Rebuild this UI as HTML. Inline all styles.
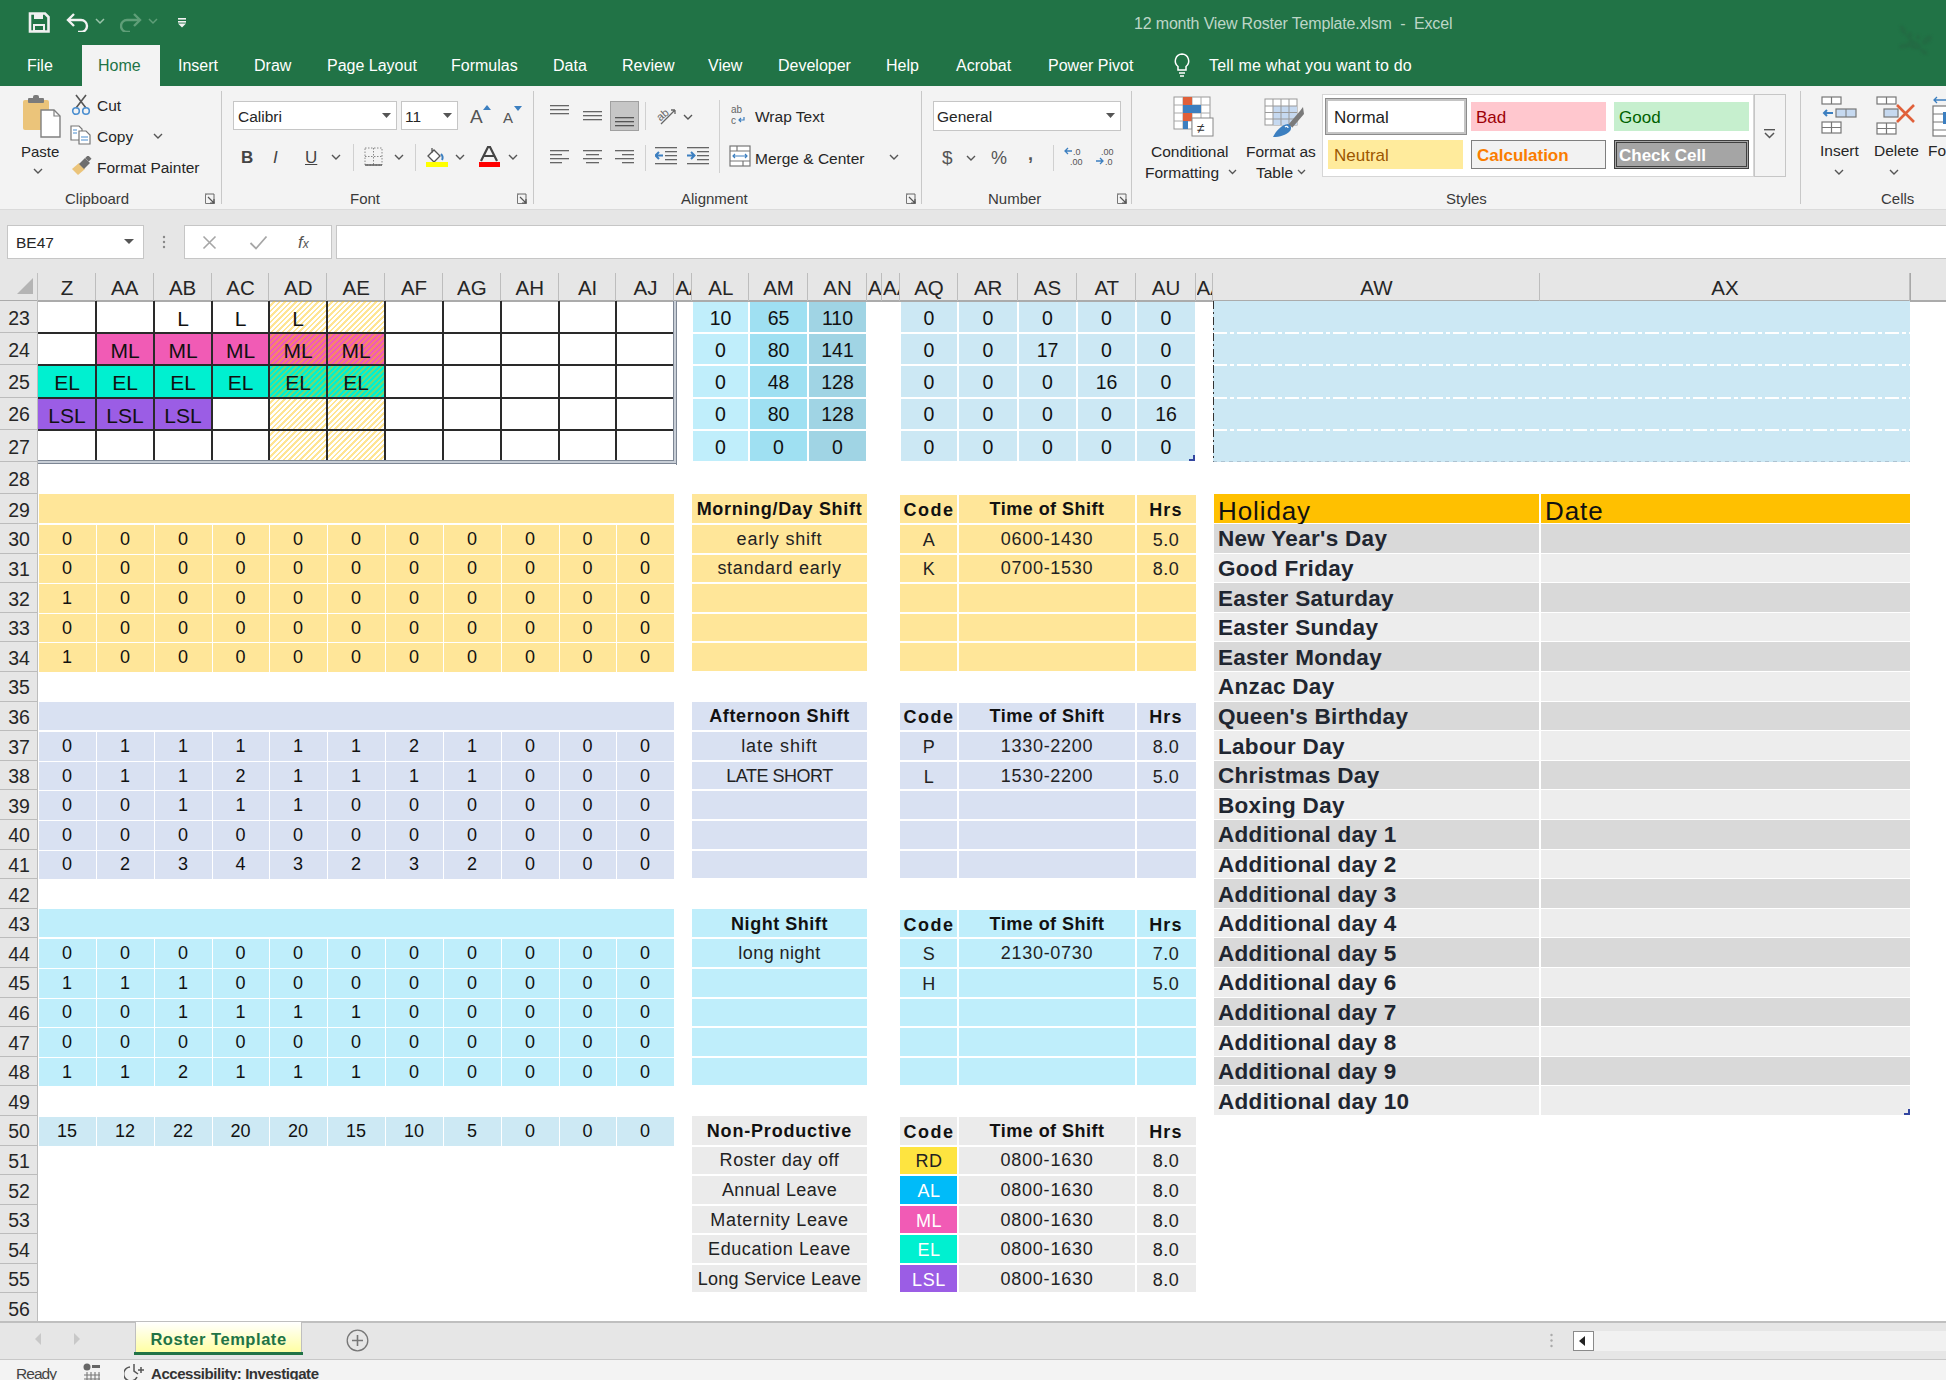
<!DOCTYPE html><html><head><meta charset="utf-8"><style>
html,body{margin:0;padding:0;width:1946px;height:1380px;overflow:hidden;background:#fff;font-family:"Liberation Sans",sans-serif;}
#root{position:relative;width:1946px;height:1380px;overflow:hidden;}
</style></head><body><div id="root">
<div style="position:absolute;left:0px;top:0px;width:1946px;height:86px;background:#217346;"></div>
<svg style="position:absolute;left:28px;top:12px;" width="22" height="21" viewBox="0 0 22 21"><path d="M2 1.5h15l3.5 3.5v14.5h-18.5z" fill="none" stroke="#f0f0f0" stroke-width="2.6"/><rect x="6" y="2" width="9" height="5" fill="#f0f0f0"/><rect x="6" y="13" width="10" height="6" fill="none" stroke="#f0f0f0" stroke-width="2"/></svg>
<svg style="position:absolute;left:66px;top:12px;" width="24" height="20" viewBox="0 0 24 20"><path d="M3 8h12a6 6 0 0 1 0 12h-3" fill="none" stroke="#f3f3f3" stroke-width="2.4"/><path d="M8 2L2 8l6 6" fill="none" stroke="#f3f3f3" stroke-width="2.4"/></svg>
<svg style="position:absolute;left:95px;top:18px;" width="10" height="7" viewBox="0 0 10 7"><path d="M1 1l4 4 4-4" fill="none" stroke="#9bc4ab" stroke-width="1.5"/></svg>
<svg style="position:absolute;left:120px;top:12px;" width="22" height="20" viewBox="0 0 22 20"><path d="M19 8H7a6 6 0 0 0 0 12h3" fill="none" stroke="#5f9e78" stroke-width="2.4"/><path d="M14 2l6 6-6 6" fill="none" stroke="#5f9e78" stroke-width="2.4"/></svg>
<svg style="position:absolute;left:148px;top:18px;" width="10" height="7" viewBox="0 0 10 7"><path d="M1 1l4 4 4-4" fill="none" stroke="#5f9e78" stroke-width="1.5"/></svg>
<svg style="position:absolute;left:177px;top:17px;" width="10" height="11" viewBox="0 0 10 11"><rect x="1" y="1" width="8" height="1.6" fill="#f3f3f3"/><rect x="1" y="4" width="8" height="1.6" fill="#f3f3f3"/><path d="M1 6.5h8L5 10.5z" fill="#f3f3f3"/></svg>
<div style="position:absolute;left:1134px;top:14.82px;font-size:16px;color:#bdd6c6;font-weight:normal;white-space:nowrap;line-height:normal;letter-spacing:-0.17px;">12 month View Roster Template.xlsm&nbsp; - &nbsp;Excel</div>
<svg style="position:absolute;left:1898px;top:24px;filter:blur(0.8px);" width="40" height="32" viewBox="0 0 40 32"><g fill="#246b44" opacity="0.9"><ellipse cx="6" cy="22" rx="5" ry="2.5" transform="rotate(-15 6 22)"/><ellipse cx="16" cy="21" rx="7" ry="4" transform="rotate(20 16 21)"/><ellipse cx="5" cy="6" rx="2.5" ry="5" transform="rotate(-25 5 6)"/><ellipse cx="12" cy="11" rx="2" ry="3"/><ellipse cx="20" cy="13" rx="2" ry="2.5"/><ellipse cx="29" cy="16" rx="3" ry="6" transform="rotate(50 29 16)"/><ellipse cx="26" cy="28" rx="4" ry="2" transform="rotate(35 26 28)"/><path d="M4 22C12 22 22 24 28 28M8 10l6 10M12 12l4 8" stroke="#246b44" stroke-width="1.6" fill="none"/></g></svg>
<div style="position:absolute;left:82px;top:45px;width:78px;height:41px;background:#f3f3f3;"></div>
<div style="position:absolute;left:27px;top:56.62px;font-size:16px;color:#ffffff;font-weight:normal;white-space:nowrap;line-height:normal;">File</div>
<div style="position:absolute;left:98px;top:56.62px;font-size:16px;color:#217346;font-weight:normal;white-space:nowrap;line-height:normal;">Home</div>
<div style="position:absolute;left:178px;top:56.62px;font-size:16px;color:#ffffff;font-weight:normal;white-space:nowrap;line-height:normal;">Insert</div>
<div style="position:absolute;left:254px;top:56.62px;font-size:16px;color:#ffffff;font-weight:normal;white-space:nowrap;line-height:normal;">Draw</div>
<div style="position:absolute;left:327px;top:56.62px;font-size:16px;color:#ffffff;font-weight:normal;white-space:nowrap;line-height:normal;">Page Layout</div>
<div style="position:absolute;left:451px;top:56.62px;font-size:16px;color:#ffffff;font-weight:normal;white-space:nowrap;line-height:normal;">Formulas</div>
<div style="position:absolute;left:553px;top:56.62px;font-size:16px;color:#ffffff;font-weight:normal;white-space:nowrap;line-height:normal;">Data</div>
<div style="position:absolute;left:622px;top:56.62px;font-size:16px;color:#ffffff;font-weight:normal;white-space:nowrap;line-height:normal;">Review</div>
<div style="position:absolute;left:708px;top:56.62px;font-size:16px;color:#ffffff;font-weight:normal;white-space:nowrap;line-height:normal;">View</div>
<div style="position:absolute;left:778px;top:56.62px;font-size:16px;color:#ffffff;font-weight:normal;white-space:nowrap;line-height:normal;">Developer</div>
<div style="position:absolute;left:886px;top:56.62px;font-size:16px;color:#ffffff;font-weight:normal;white-space:nowrap;line-height:normal;">Help</div>
<div style="position:absolute;left:956px;top:56.62px;font-size:16px;color:#ffffff;font-weight:normal;white-space:nowrap;line-height:normal;">Acrobat</div>
<div style="position:absolute;left:1048px;top:56.62px;font-size:16px;color:#ffffff;font-weight:normal;white-space:nowrap;line-height:normal;">Power Pivot</div>
<svg style="position:absolute;left:1173px;top:52px;" width="18" height="26" viewBox="0 0 18 26"><path d="M9 2a7 7 0 0 0-4 12.5V18h8v-3.5A7 7 0 0 0 9 2z" fill="none" stroke="#fff" stroke-width="1.5"/><path d="M6 21h6M7 24h4" stroke="#fff" stroke-width="1.5"/></svg>
<div style="position:absolute;left:1209px;top:56.62px;font-size:16px;color:#ffffff;font-weight:normal;white-space:nowrap;line-height:normal;letter-spacing:0.202px;">Tell me what you want to do</div>
<div style="position:absolute;left:0px;top:86px;width:1946px;height:123px;background:#f3f3f3;"></div>
<div style="position:absolute;left:0px;top:209px;width:1946px;height:1px;background:#dadada;"></div>
<div style="position:absolute;left:221px;top:91px;width:1px;height:113px;background:#c8c8c8;"></div>
<div style="position:absolute;left:533px;top:91px;width:1px;height:113px;background:#c8c8c8;"></div>
<div style="position:absolute;left:921px;top:91px;width:1px;height:113px;background:#c8c8c8;"></div>
<div style="position:absolute;left:1131px;top:91px;width:1px;height:113px;background:#c8c8c8;"></div>
<div style="position:absolute;left:1800px;top:91px;width:1px;height:113px;background:#c8c8c8;"></div>
<div style="position:absolute;left:65px;top:190.43px;font-size:15px;color:#3a3a3a;font-weight:normal;white-space:nowrap;line-height:normal;">Clipboard</div>
<div style="position:absolute;left:350px;top:190.43px;font-size:15px;color:#3a3a3a;font-weight:normal;white-space:nowrap;line-height:normal;">Font</div>
<div style="position:absolute;left:681px;top:190.43px;font-size:15px;color:#3a3a3a;font-weight:normal;white-space:nowrap;line-height:normal;">Alignment</div>
<div style="position:absolute;left:988px;top:190.43px;font-size:15px;color:#3a3a3a;font-weight:normal;white-space:nowrap;line-height:normal;">Number</div>
<div style="position:absolute;left:1446px;top:190.43px;font-size:15px;color:#3a3a3a;font-weight:normal;white-space:nowrap;line-height:normal;">Styles</div>
<div style="position:absolute;left:1881px;top:190.43px;font-size:15px;color:#3a3a3a;font-weight:normal;white-space:nowrap;line-height:normal;">Cells</div>
<svg style="position:absolute;left:204px;top:193px;" width="12" height="12" viewBox="0 0 12 12"><path d="M1 1h9v9" fill="none" stroke="#666" stroke-width="1"/><path d="M1 1v9h9" fill="none" stroke="#888" stroke-width="1" opacity="0"/><path d="M2.5 1.5h-1v9h9v-1" fill="none" stroke="#777"/><path d="M4 4l6 6M10 6v4H6" fill="none" stroke="#555" stroke-width="1.2"/></svg>
<svg style="position:absolute;left:516px;top:193px;" width="12" height="12" viewBox="0 0 12 12"><path d="M1 1h9v9" fill="none" stroke="#666" stroke-width="1"/><path d="M1 1v9h9" fill="none" stroke="#888" stroke-width="1" opacity="0"/><path d="M2.5 1.5h-1v9h9v-1" fill="none" stroke="#777"/><path d="M4 4l6 6M10 6v4H6" fill="none" stroke="#555" stroke-width="1.2"/></svg>
<svg style="position:absolute;left:905px;top:193px;" width="12" height="12" viewBox="0 0 12 12"><path d="M1 1h9v9" fill="none" stroke="#666" stroke-width="1"/><path d="M1 1v9h9" fill="none" stroke="#888" stroke-width="1" opacity="0"/><path d="M2.5 1.5h-1v9h9v-1" fill="none" stroke="#777"/><path d="M4 4l6 6M10 6v4H6" fill="none" stroke="#555" stroke-width="1.2"/></svg>
<svg style="position:absolute;left:1116px;top:193px;" width="12" height="12" viewBox="0 0 12 12"><path d="M1 1h9v9" fill="none" stroke="#666" stroke-width="1"/><path d="M1 1v9h9" fill="none" stroke="#888" stroke-width="1" opacity="0"/><path d="M2.5 1.5h-1v9h9v-1" fill="none" stroke="#777"/><path d="M4 4l6 6M10 6v4H6" fill="none" stroke="#555" stroke-width="1.2"/></svg>
<svg style="position:absolute;left:22px;top:95px;" width="40" height="43" viewBox="0 0 40 43"><rect x="1" y="5" width="26" height="30" rx="2" fill="#ebc47a"/><rect x="6" y="3" width="16" height="5" rx="1" fill="#7b7b7b"/><rect x="11" y="0" width="6" height="5" rx="2" fill="#7b7b7b"/><path d="M19 15h13l6 6v21H19z" fill="#fff" stroke="#808080" stroke-width="1.4"/><path d="M32 15v6h6" fill="none" stroke="#808080" stroke-width="1.2"/></svg>
<div style="position:absolute;left:21px;top:143.43px;font-size:15px;color:#262626;font-weight:normal;white-space:nowrap;line-height:normal;">Paste</div>
<svg style="position:absolute;left:33px;top:168px;" width="10" height="7" viewBox="0 0 10 7"><path d="M1 1l4 4 4-4" fill="none" stroke="#555" stroke-width="1.4"/></svg>
<svg style="position:absolute;left:71px;top:94px;" width="22" height="22" viewBox="0 0 22 22"><path d="M5 1l10 13M15 1L5 14" stroke="#555" stroke-width="1.6"/><circle cx="5" cy="17" r="3.3" fill="none" stroke="#4a8ed0" stroke-width="1.6"/><circle cx="15" cy="17" r="3.3" fill="none" stroke="#4a8ed0" stroke-width="1.6"/></svg>
<div style="position:absolute;left:97px;top:97.47px;font-size:15.5px;color:#262626;font-weight:normal;white-space:nowrap;line-height:normal;">Cut</div>
<svg style="position:absolute;left:70px;top:125px;" width="22" height="20" viewBox="0 0 22 20"><path d="M1 1h8l3 3v11H1z" fill="#fff" stroke="#777" stroke-width="1.2"/><path d="M9 6h7l4 4v9H9z" fill="#fff" stroke="#777" stroke-width="1.2"/><path d="M3 5h4M3 8h4M11 12h7M11 15h7" stroke="#4a8ed0" stroke-width="1.2"/></svg>
<div style="position:absolute;left:97px;top:128.47px;font-size:15.5px;color:#262626;font-weight:normal;white-space:nowrap;line-height:normal;">Copy</div>
<svg style="position:absolute;left:153px;top:133px;" width="10" height="7" viewBox="0 0 10 7"><path d="M1 1l4 4 4-4" fill="none" stroke="#555" stroke-width="1.4"/></svg>
<svg style="position:absolute;left:71px;top:156px;" width="22" height="20" viewBox="0 0 22 20"><path d="M1 13l7-6 6 6-7 6z" fill="#ebc47a"/><path d="M8 8l6-6 5 5-6 6z" fill="#6e6e6e"/><rect x="15" y="0" width="5" height="4" fill="#6e6e6e" transform="rotate(45 17 2)"/></svg>
<div style="position:absolute;left:97px;top:159.47px;font-size:15.5px;color:#262626;font-weight:normal;white-space:nowrap;line-height:normal;">Format Painter</div>
<div style="position:absolute;left:233px;top:101px;width:164px;height:29px;background:#fff;border:1px solid #c6c6c6;box-sizing:border-box;"></div>
<div style="position:absolute;left:238px;top:107.97px;font-size:15.5px;color:#262626;font-weight:normal;white-space:nowrap;line-height:normal;">Calibri</div>
<svg style="position:absolute;left:382px;top:113px;" width="9" height="5" viewBox="0 0 9 5"><path d="M0 0h9L4.5 5z" fill="#555"/></svg>
<div style="position:absolute;left:401px;top:101px;width:57px;height:29px;background:#fff;border:1px solid #c6c6c6;box-sizing:border-box;"></div>
<div style="position:absolute;left:405px;top:107.97px;font-size:15.5px;color:#262626;font-weight:normal;white-space:nowrap;line-height:normal;">11</div>
<svg style="position:absolute;left:443px;top:113px;" width="9" height="5" viewBox="0 0 9 5"><path d="M0 0h9L4.5 5z" fill="#555"/></svg>
<div style="position:absolute;left:470px;top:105.81px;font-size:19px;color:#555;font-weight:normal;white-space:nowrap;line-height:normal;">A</div>
<svg style="position:absolute;left:483px;top:105px;" width="8" height="5" viewBox="0 0 8 5"><path d="M0 5h8L4 0z" fill="#3c7fc0"/></svg>
<div style="position:absolute;left:503px;top:109.42px;font-size:15px;color:#555;font-weight:normal;white-space:nowrap;line-height:normal;">A</div>
<svg style="position:absolute;left:514px;top:106px;" width="8" height="5" viewBox="0 0 8 5"><path d="M0 0h8L4 5z" fill="#3c7fc0"/></svg>
<div style="position:absolute;left:241px;top:147.62px;font-size:17px;color:#444;font-weight:bold;white-space:nowrap;line-height:normal;">B</div>
<div style="position:absolute;left:273px;top:147.62px;font-size:17px;color:#444;font-weight:normal;white-space:nowrap;line-height:normal;font-style:italic;font-family:"Liberation Serif",serif;">I</div>
<div style="position:absolute;left:305px;top:147.62px;font-size:17px;color:#444;font-weight:normal;white-space:nowrap;line-height:normal;text-decoration:underline;">U</div>
<svg style="position:absolute;left:331px;top:154px;" width="10" height="7" viewBox="0 0 10 7"><path d="M1 1l4 4 4-4" fill="none" stroke="#555" stroke-width="1.4"/></svg>
<svg style="position:absolute;left:394px;top:154px;" width="10" height="7" viewBox="0 0 10 7"><path d="M1 1l4 4 4-4" fill="none" stroke="#555" stroke-width="1.4"/></svg>
<svg style="position:absolute;left:455px;top:154px;" width="10" height="7" viewBox="0 0 10 7"><path d="M1 1l4 4 4-4" fill="none" stroke="#555" stroke-width="1.4"/></svg>
<svg style="position:absolute;left:508px;top:154px;" width="10" height="7" viewBox="0 0 10 7"><path d="M1 1l4 4 4-4" fill="none" stroke="#555" stroke-width="1.4"/></svg>
<div style="position:absolute;left:353px;top:144px;width:1px;height:27px;background:#d0d0d0;"></div>
<div style="position:absolute;left:415px;top:144px;width:1px;height:27px;background:#d0d0d0;"></div>
<svg style="position:absolute;left:364px;top:147px;" width="19" height="19" viewBox="0 0 19 19"><path d="M1 1h17v17H1zM9.5 1v17M1 9.5h17" fill="none" stroke="#888" stroke-width="1" stroke-dasharray="1.5 1.5"/><path d="M1 18h17" stroke="#555" stroke-width="1.4"/></svg>
<svg style="position:absolute;left:425px;top:146px;" width="24" height="23" viewBox="0 0 24 23"><path d="M7 2v5M3 10l6-6 6 6-6 6z" fill="#fff" stroke="#555" stroke-width="1.3"/><path d="M16 8c2 2 2 4 1 6" fill="none" stroke="#3c7fc0" stroke-width="2"/><rect x="1" y="16" width="22" height="5" fill="#ffff00"/></svg>
<svg style="position:absolute;left:478px;top:146px;" width="22" height="23" viewBox="0 0 22 23"><path d="M3 15L10 1h2l7 14M6 10h10" fill="none" stroke="#444" stroke-width="2.2"/><rect x="1" y="16" width="22" height="5" fill="#ff0000"/></svg>
<svg style="position:absolute;left:550px;top:103px;" width="19" height="20" viewBox="0 0 19 20"><rect x="0" y="2" width="19" height="1.3" fill="#666"/><rect x="0" y="6" width="19" height="1.3" fill="#666"/><rect x="0" y="10" width="19" height="1.3" fill="#666"/></svg>
<svg style="position:absolute;left:583px;top:108px;" width="19" height="20" viewBox="0 0 19 20"><rect x="0" y="3" width="19" height="1.3" fill="#666"/><rect x="0" y="7" width="19" height="1.3" fill="#666"/><rect x="0" y="11" width="19" height="1.3" fill="#666"/></svg>
<div style="position:absolute;left:610px;top:101px;width:29px;height:30px;background:#c6c6c6;border:1px solid #a0a0a0;box-sizing:border-box;"></div>
<svg style="position:absolute;left:615px;top:113px;" width="19" height="20" viewBox="0 0 19 20"><rect x="0" y="4" width="19" height="1.3" fill="#555"/><rect x="0" y="8" width="19" height="1.3" fill="#555"/><rect x="0" y="12" width="19" height="1.3" fill="#555"/></svg>
<div style="position:absolute;left:645px;top:102px;width:1px;height:28px;background:#d0d0d0;"></div>
<svg style="position:absolute;left:655px;top:104px;" width="24" height="22" viewBox="0 0 24 22"><text x="1" y="14" font-size="11" fill="#666" transform="rotate(-40 8 10)" font-family="Liberation Sans">ab</text><path d="M6 20L20 6M20 6h-4M20 6v4" fill="none" stroke="#666" stroke-width="1.3"/></svg>
<svg style="position:absolute;left:683px;top:114px;" width="10" height="7" viewBox="0 0 10 7"><path d="M1 1l4 4 4-4" fill="none" stroke="#555" stroke-width="1.4"/></svg>
<div style="position:absolute;left:719px;top:100px;width:1px;height:73px;background:#d0d0d0;"></div>
<svg style="position:absolute;left:731px;top:104px;" width="18" height="22" viewBox="0 0 18 22"><text x="0" y="9" font-size="10" fill="#666" font-family="Liberation Sans">ab</text><text x="0" y="20" font-size="10" fill="#666" font-family="Liberation Sans">c</text><path d="M13 13v3h-5M10 14l-2 2 2 2" fill="none" stroke="#3c7fc0" stroke-width="1.2"/></svg>
<div style="position:absolute;left:755px;top:108.47px;font-size:15.5px;color:#262626;font-weight:normal;white-space:nowrap;line-height:normal;">Wrap Text</div>
<svg style="position:absolute;left:550px;top:148px;" width="19" height="20" viewBox="0 0 19 20"><rect x="0" y="2" width="19" height="1.3" fill="#666"/><rect x="0" y="6" width="12" height="1.3" fill="#666"/><rect x="0" y="10" width="19" height="1.3" fill="#666"/><rect x="0" y="14" width="12" height="1.3" fill="#666"/></svg>
<svg style="position:absolute;left:583px;top:148px;" width="19" height="20" viewBox="0 0 19 20"><rect x="0" y="2" width="19" height="1.3" fill="#666"/><rect x="3" y="6" width="13" height="1.3" fill="#666"/><rect x="0" y="10" width="19" height="1.3" fill="#666"/><rect x="3" y="14" width="13" height="1.3" fill="#666"/></svg>
<svg style="position:absolute;left:615px;top:148px;" width="19" height="20" viewBox="0 0 19 20"><rect x="0" y="2" width="19" height="1.3" fill="#666"/><rect x="7" y="6" width="12" height="1.3" fill="#666"/><rect x="0" y="10" width="19" height="1.3" fill="#666"/><rect x="7" y="14" width="12" height="1.3" fill="#666"/></svg>
<div style="position:absolute;left:645px;top:145px;width:1px;height:26px;background:#d0d0d0;"></div>
<svg style="position:absolute;left:655px;top:146px;" width="22" height="20" viewBox="0 0 22 20"><rect x="0" y="1" width="22" height="1.3" fill="#666"/><rect x="10" y="5" width="12" height="1.3" fill="#666"/><rect x="10" y="9" width="12" height="1.3" fill="#666"/><rect x="10" y="13" width="12" height="1.3" fill="#666"/><rect x="0" y="17" width="22" height="1.3" fill="#666"/><path d="M8 9.5H1M4 6l-3.5 3.5L4 13" fill="none" stroke="#3c7fc0" stroke-width="2"/></svg>
<svg style="position:absolute;left:687px;top:146px;" width="22" height="20" viewBox="0 0 22 20"><rect x="0" y="1" width="22" height="1.3" fill="#666"/><rect x="10" y="5" width="12" height="1.3" fill="#666"/><rect x="10" y="9" width="12" height="1.3" fill="#666"/><rect x="10" y="13" width="12" height="1.3" fill="#666"/><rect x="0" y="17" width="22" height="1.3" fill="#666"/><path d="M0 9.5h7M4 6l3.5 3.5L4 13" fill="none" stroke="#3c7fc0" stroke-width="2"/></svg>
<svg style="position:absolute;left:729px;top:145px;" width="22" height="22" viewBox="0 0 22 22"><rect x="1" y="1" width="20" height="20" fill="#fff" stroke="#777" stroke-width="1.2"/><path d="M1 6h20M1 16h20M8 1v5M14 16v5" stroke="#777" stroke-width="1.2"/><path d="M4 11h14M6 9l-2 2 2 2M16 9l2 2-2 2" fill="none" stroke="#3c7fc0" stroke-width="1.2"/></svg>
<div style="position:absolute;left:755px;top:149.97px;font-size:15.5px;color:#262626;font-weight:normal;white-space:nowrap;line-height:normal;">Merge &amp; Center</div>
<svg style="position:absolute;left:889px;top:154px;" width="10" height="7" viewBox="0 0 10 7"><path d="M1 1l4 4 4-4" fill="none" stroke="#555" stroke-width="1.4"/></svg>
<div style="position:absolute;left:933px;top:101px;width:188px;height:30px;background:#fff;border:1px solid #c6c6c6;box-sizing:border-box;"></div>
<div style="position:absolute;left:937px;top:108.47px;font-size:15.5px;color:#262626;font-weight:normal;white-space:nowrap;line-height:normal;">General</div>
<svg style="position:absolute;left:1106px;top:113px;" width="9" height="5" viewBox="0 0 9 5"><path d="M0 0h9L4.5 5z" fill="#555"/></svg>
<div style="position:absolute;left:942px;top:146.81px;font-size:19px;color:#555;font-weight:normal;white-space:nowrap;line-height:normal;">$</div>
<svg style="position:absolute;left:966px;top:155px;" width="10" height="7" viewBox="0 0 10 7"><path d="M1 1l4 4 4-4" fill="none" stroke="#555" stroke-width="1.4"/></svg>
<div style="position:absolute;left:991px;top:147.71px;font-size:18px;color:#555;font-weight:normal;white-space:nowrap;line-height:normal;">%</div>
<div style="position:absolute;left:1028px;top:143.71px;font-size:18px;color:#555;font-weight:bold;white-space:nowrap;line-height:normal;">,</div>
<div style="position:absolute;left:1053px;top:145px;width:1px;height:26px;background:#d0d0d0;"></div>
<svg style="position:absolute;left:1063px;top:146px;" width="22" height="22" viewBox="0 0 22 22"><path d="M9 5H2M5 2L2 5l3 3" fill="none" stroke="#3c7fc0" stroke-width="1.3"/><text x="10" y="9" font-size="9" fill="#555" font-family="Liberation Sans">.0</text><text x="7" y="19" font-size="9" fill="#555" font-family="Liberation Sans">.00</text></svg>
<svg style="position:absolute;left:1095px;top:146px;" width="22" height="22" viewBox="0 0 22 22"><text x="6" y="9" font-size="9" fill="#555" font-family="Liberation Sans">.00</text><path d="M1 15h7M5 12l3 3-3 3" fill="none" stroke="#3c7fc0" stroke-width="1.3"/><text x="10" y="19" font-size="9" fill="#555" font-family="Liberation Sans">.0</text></svg>
<svg style="position:absolute;left:1173px;top:96px;" width="42" height="41" viewBox="0 0 42 41"><g stroke="#999" stroke-width="1" fill="#fff"><rect x="1" y="1" width="36" height="32"/></g><path d="M1 9h36M1 17h36M1 25h36M10 1v32M19 1v32M28 1v32" stroke="#aaa" stroke-width="1"/><rect x="10" y="1" width="9" height="8" fill="#e0603a"/><rect x="10" y="9" width="18" height="8" fill="#3c7fc0"/><rect x="10" y="17" width="9" height="8" fill="#e0603a"/><rect x="10" y="25" width="5" height="8" fill="#3c7fc0"/><rect x="19" y="22" width="21" height="18" fill="#fff" stroke="#888" stroke-width="1"/><text x="24" y="37" font-size="14" fill="#333" font-family="Liberation Sans">≠</text></svg>
<div style="position:absolute;left:1151px;top:142.97px;font-size:15.5px;color:#262626;font-weight:normal;white-space:nowrap;line-height:normal;">Conditional</div>
<div style="position:absolute;left:1145px;top:164.47px;font-size:15.5px;color:#262626;font-weight:normal;white-space:nowrap;line-height:normal;">Formatting</div>
<svg style="position:absolute;left:1228px;top:169px;" width="9" height="6" viewBox="0 0 9 6"><path d="M1 1l3.5 3.5L8 1" fill="none" stroke="#555" stroke-width="1.3"/></svg>
<svg style="position:absolute;left:1264px;top:98px;" width="40" height="40" viewBox="0 0 40 40"><rect x="1" y="1" width="32" height="26" fill="#fff" stroke="#999"/><rect x="9" y="8" width="24" height="19" fill="#c6d9f0"/><path d="M1 8h32M1 14.5h32M1 21h32M9 1v26M17 1v26M25 1v26" stroke="#999" stroke-width="1"/><path d="M24 27L36 13l3 -4 1 7 -12 14z" fill="#7a7a7a"/><path d="M24 27l4 3" stroke="#f3f3f3" stroke-width="1.2"/><path d="M9 39c3-6 8-12 15-13 3 1 4 4 2 7-4 4-10 6-17 6z" fill="#3c7fc0"/><path d="M21 29c1-1 3-1 3 1" stroke="#fff" stroke-width="1.3" fill="none"/></svg>
<div style="position:absolute;left:1246px;top:142.97px;font-size:15.5px;color:#262626;font-weight:normal;white-space:nowrap;line-height:normal;">Format as</div>
<div style="position:absolute;left:1256px;top:164.47px;font-size:15.5px;color:#262626;font-weight:normal;white-space:nowrap;line-height:normal;">Table</div>
<svg style="position:absolute;left:1297px;top:169px;" width="9" height="6" viewBox="0 0 9 6"><path d="M1 1l3.5 3.5L8 1" fill="none" stroke="#555" stroke-width="1.3"/></svg>
<div style="position:absolute;left:1322px;top:94px;width:432px;height:83px;background:#fff;border:1px solid #d6d6d6;box-sizing:border-box;"></div>
<div style="position:absolute;left:1754px;top:94px;width:32px;height:83px;background:#f3f3f3;border:1px solid #c6c6c6;box-sizing:border-box;"></div>
<svg style="position:absolute;left:1763px;top:128px;" width="13" height="12" viewBox="0 0 13 12"><rect x="1" y="1" width="11" height="1.4" fill="#555"/><path d="M2 5l4.5 4.5L11 5" fill="none" stroke="#555" stroke-width="1.5"/></svg>
<div style="position:absolute;left:1325px;top:98px;width:142px;height:37px;background:#fff;border:1px solid #8c8c8c;box-shadow:inset 0 0 0 2px #c4c4c4;box-sizing:border-box;"></div>
<div style="position:absolute;left:1334px;top:107.61px;font-size:17px;color:#1e1e1e;font-weight:normal;white-space:nowrap;line-height:normal;">Normal</div>
<div style="position:absolute;left:1471px;top:102px;width:135px;height:29px;background:#ffc7ce;"></div>
<div style="position:absolute;left:1476px;top:107.61px;font-size:17px;color:#9c0006;font-weight:normal;white-space:nowrap;line-height:normal;">Bad</div>
<div style="position:absolute;left:1614px;top:102px;width:135px;height:29px;background:#c6efce;"></div>
<div style="position:absolute;left:1619px;top:107.61px;font-size:17px;color:#006100;font-weight:normal;white-space:nowrap;line-height:normal;">Good</div>
<div style="position:absolute;left:1328px;top:140px;width:135px;height:29px;background:#ffeb9c;"></div>
<div style="position:absolute;left:1334px;top:145.62px;font-size:17px;color:#9c5700;font-weight:normal;white-space:nowrap;line-height:normal;">Neutral</div>
<div style="position:absolute;left:1471px;top:140px;width:135px;height:29px;background:#f2f2f2;border:1px solid #7f7f7f;box-sizing:border-box;"></div>
<div style="position:absolute;left:1477px;top:145.62px;font-size:17px;color:#fa7d00;font-weight:bold;white-space:nowrap;line-height:normal;">Calculation</div>
<div style="position:absolute;left:1614px;top:140px;width:135px;height:29px;background:#a5a5a5;border:3px double #3f3f3f;box-sizing:border-box;"></div>
<div style="position:absolute;left:1619px;top:145.62px;font-size:17px;color:#ffffff;font-weight:bold;white-space:nowrap;line-height:normal;">Check Cell</div>
<svg style="position:absolute;left:1821px;top:96px;" width="38" height="38" viewBox="0 0 38 38"><g fill="#fff" stroke="#777" stroke-width="1.2"><rect x="1" y="1" width="19" height="7"/><path d="M10.5 1v7"/><rect x="1" y="26" width="19" height="11"/><path d="M1 31.5h19M10.5 26v11"/></g><rect x="15" y="13" width="20" height="8" fill="#c6d9f0" stroke="#777" stroke-width="1.2"/><path d="M25 13v8" stroke="#777"/><path d="M12 17H3M6 14l-3 3 3 3" fill="none" stroke="#3c7fc0" stroke-width="2"/></svg>
<div style="position:absolute;left:1820px;top:142.47px;font-size:15.5px;color:#262626;font-weight:normal;white-space:nowrap;line-height:normal;">Insert</div>
<svg style="position:absolute;left:1834px;top:169px;" width="10" height="7" viewBox="0 0 10 7"><path d="M1 1l4 4 4-4" fill="none" stroke="#555" stroke-width="1.4"/></svg>
<svg style="position:absolute;left:1876px;top:96px;" width="42" height="40" viewBox="0 0 42 40"><g fill="#fff" stroke="#777" stroke-width="1.2"><rect x="1" y="1" width="19" height="7"/><path d="M10.5 1v7"/><rect x="1" y="27" width="19" height="11"/><path d="M1 32.5h19M10.5 27v11"/></g><rect x="8" y="13" width="14" height="8" fill="#c6d9f0" stroke="#777" stroke-width="1.2"/><path d="M21 9l17 17M38 9L21 26" stroke="#e0603a" stroke-width="2.6"/></svg>
<div style="position:absolute;left:1874px;top:142.47px;font-size:15.5px;color:#262626;font-weight:normal;white-space:nowrap;line-height:normal;">Delete</div>
<svg style="position:absolute;left:1889px;top:169px;" width="10" height="7" viewBox="0 0 10 7"><path d="M1 1l4 4 4-4" fill="none" stroke="#555" stroke-width="1.4"/></svg>
<svg style="position:absolute;left:1932px;top:94px;" width="14" height="44" viewBox="0 0 14 44"><path d="M2 6h12M5 3L2 6l3 3" fill="none" stroke="#3c7fc0" stroke-width="1.3"/><rect x="1" y="12" width="14" height="30" fill="#fff" stroke="#777" stroke-width="1.2"/><path d="M1 20h14M1 28h14M1 36h14" stroke="#777"/><rect x="11" y="18" width="4" height="12" fill="#3c7fc0"/></svg>
<div style="position:absolute;left:1928px;top:142.47px;font-size:15.5px;color:#262626;font-weight:normal;white-space:nowrap;line-height:normal;">Fo</div>
<div style="position:absolute;left:0px;top:210px;width:1946px;height:62px;background:#e6e6e6;"></div>
<div style="position:absolute;left:7px;top:225px;width:137px;height:34px;background:#fff;border:1px solid #c6c6c6;box-sizing:border-box;"></div>
<div style="position:absolute;left:16px;top:234.27px;font-size:15.5px;color:#262626;font-weight:normal;white-space:nowrap;line-height:normal;">BE47</div>
<svg style="position:absolute;left:124px;top:239px;" width="10" height="5" viewBox="0 0 10 5"><path d="M0 0h10L5 5z" fill="#555"/></svg>
<svg style="position:absolute;left:162px;top:235px;" width="4" height="14" viewBox="0 0 4 14"><circle cx="2" cy="2" r="1.2" fill="#888"/><circle cx="2" cy="7" r="1.2" fill="#888"/><circle cx="2" cy="12" r="1.2" fill="#888"/></svg>
<div style="position:absolute;left:184px;top:225px;width:148px;height:34px;background:#fff;border:1px solid #c6c6c6;box-sizing:border-box;"></div>
<svg style="position:absolute;left:202px;top:235px;" width="15" height="15" viewBox="0 0 15 15"><path d="M1.5 1.5l12 12M13.5 1.5l-12 12" stroke="#a6a6a6" stroke-width="1.6"/></svg>
<svg style="position:absolute;left:249px;top:235px;" width="19" height="15" viewBox="0 0 19 15"><path d="M1.5 8l5.5 5.5L17.5 1.5" fill="none" stroke="#a6a6a6" stroke-width="1.8"/></svg>
<div style="position:absolute;left:298px;top:232.62px;font-size:17px;color:#555;font-weight:normal;white-space:nowrap;line-height:normal;font-family:"Liberation Serif",serif;"><i>f</i><span style="font-size:12px"><i>x</i></span></div>
<div style="position:absolute;left:336px;top:225px;width:1620px;height:34px;background:#fff;border:1px solid #c6c6c6;box-sizing:border-box;"></div>
<div style="position:absolute;left:0px;top:272px;width:1946px;height:29px;background:#e6e6e6;"></div>
<div style="position:absolute;left:0px;top:300px;width:1946px;height:2px;background:#ababab;"></div>
<svg style="position:absolute;left:14px;top:276px;" width="20" height="20" viewBox="0 0 20 20"><path d="M19 2v16H3z" fill="#b4b4b4"/></svg>
<div style="position:absolute;left:37px;top:273px;width:1px;height:28px;background:#c0c0c0;"></div>
<div style="position:absolute;left:95px;top:273px;width:1px;height:28px;background:#bdbdbd;"></div>
<div style="position:absolute;left:38.0px;top:275.95px;width:57.849999999999994px;text-align:center;font-size:20.5px;color:#262626;font-weight:normal;white-space:nowrap;line-height:normal;">Z</div>
<div style="position:absolute;left:153px;top:273px;width:1px;height:28px;background:#bdbdbd;"></div>
<div style="position:absolute;left:95.85px;top:275.95px;width:57.849999999999994px;text-align:center;font-size:20.5px;color:#262626;font-weight:normal;white-space:nowrap;line-height:normal;">AA</div>
<div style="position:absolute;left:211px;top:273px;width:1px;height:28px;background:#bdbdbd;"></div>
<div style="position:absolute;left:153.7px;top:275.95px;width:57.85000000000002px;text-align:center;font-size:20.5px;color:#262626;font-weight:normal;white-space:nowrap;line-height:normal;">AB</div>
<div style="position:absolute;left:268px;top:273px;width:1px;height:28px;background:#bdbdbd;"></div>
<div style="position:absolute;left:211.55px;top:275.95px;width:57.849999999999966px;text-align:center;font-size:20.5px;color:#262626;font-weight:normal;white-space:nowrap;line-height:normal;">AC</div>
<div style="position:absolute;left:326px;top:273px;width:1px;height:28px;background:#bdbdbd;"></div>
<div style="position:absolute;left:269.4px;top:275.95px;width:57.85000000000002px;text-align:center;font-size:20.5px;color:#262626;font-weight:normal;white-space:nowrap;line-height:normal;">AD</div>
<div style="position:absolute;left:384px;top:273px;width:1px;height:28px;background:#bdbdbd;"></div>
<div style="position:absolute;left:327.25px;top:275.95px;width:57.85000000000002px;text-align:center;font-size:20.5px;color:#262626;font-weight:normal;white-space:nowrap;line-height:normal;">AE</div>
<div style="position:absolute;left:442px;top:273px;width:1px;height:28px;background:#bdbdbd;"></div>
<div style="position:absolute;left:385.1px;top:275.95px;width:57.849999999999966px;text-align:center;font-size:20.5px;color:#262626;font-weight:normal;white-space:nowrap;line-height:normal;">AF</div>
<div style="position:absolute;left:500px;top:273px;width:1px;height:28px;background:#bdbdbd;"></div>
<div style="position:absolute;left:442.95px;top:275.95px;width:57.85000000000002px;text-align:center;font-size:20.5px;color:#262626;font-weight:normal;white-space:nowrap;line-height:normal;">AG</div>
<div style="position:absolute;left:558px;top:273px;width:1px;height:28px;background:#bdbdbd;"></div>
<div style="position:absolute;left:500.8px;top:275.95px;width:57.849999999999966px;text-align:center;font-size:20.5px;color:#262626;font-weight:normal;white-space:nowrap;line-height:normal;">AH</div>
<div style="position:absolute;left:615px;top:273px;width:1px;height:28px;background:#bdbdbd;"></div>
<div style="position:absolute;left:558.65px;top:275.95px;width:57.85000000000002px;text-align:center;font-size:20.5px;color:#262626;font-weight:normal;white-space:nowrap;line-height:normal;">AI</div>
<div style="position:absolute;left:673px;top:273px;width:1px;height:28px;background:#bdbdbd;"></div>
<div style="position:absolute;left:616.5px;top:275.95px;width:57.85000000000002px;text-align:center;font-size:20.5px;color:#262626;font-weight:normal;white-space:nowrap;line-height:normal;">AJ</div>
<div style="position:absolute;left:691px;top:273px;width:1px;height:28px;background:#bdbdbd;"></div>
<div style="position:absolute;left:675.4px;top:275.9px;width:16.1px;overflow:hidden;font-size:20.5px;color:#262626;white-space:nowrap;line-height:normal;">AA</div>
<div style="position:absolute;left:748px;top:273px;width:1px;height:28px;background:#bdbdbd;"></div>
<div style="position:absolute;left:692.5px;top:275.95px;width:56.5px;text-align:center;font-size:20.5px;color:#262626;font-weight:normal;white-space:nowrap;line-height:normal;">AL</div>
<div style="position:absolute;left:807px;top:273px;width:1px;height:28px;background:#bdbdbd;"></div>
<div style="position:absolute;left:749px;top:275.95px;width:59px;text-align:center;font-size:20.5px;color:#262626;font-weight:normal;white-space:nowrap;line-height:normal;">AM</div>
<div style="position:absolute;left:866px;top:273px;width:1px;height:28px;background:#bdbdbd;"></div>
<div style="position:absolute;left:808px;top:275.95px;width:59px;text-align:center;font-size:20.5px;color:#262626;font-weight:normal;white-space:nowrap;line-height:normal;">AN</div>
<div style="position:absolute;left:881px;top:273px;width:1px;height:28px;background:#bdbdbd;"></div>
<div style="position:absolute;left:868.0px;top:275.9px;width:13.0px;overflow:hidden;font-size:20.5px;color:#262626;white-space:nowrap;line-height:normal;">AA</div>
<div style="position:absolute;left:899px;top:273px;width:1px;height:28px;background:#bdbdbd;"></div>
<div style="position:absolute;left:883.0px;top:275.9px;width:15.5px;overflow:hidden;font-size:20.5px;color:#262626;white-space:nowrap;line-height:normal;">AA</div>
<div style="position:absolute;left:957px;top:273px;width:1px;height:28px;background:#bdbdbd;"></div>
<div style="position:absolute;left:899.5px;top:275.95px;width:59.0px;text-align:center;font-size:20.5px;color:#262626;font-weight:normal;white-space:nowrap;line-height:normal;">AQ</div>
<div style="position:absolute;left:1017px;top:273px;width:1px;height:28px;background:#bdbdbd;"></div>
<div style="position:absolute;left:958.5px;top:275.95px;width:59.299999999999955px;text-align:center;font-size:20.5px;color:#262626;font-weight:normal;white-space:nowrap;line-height:normal;">AR</div>
<div style="position:absolute;left:1076px;top:273px;width:1px;height:28px;background:#bdbdbd;"></div>
<div style="position:absolute;left:1017.8px;top:275.95px;width:59.200000000000045px;text-align:center;font-size:20.5px;color:#262626;font-weight:normal;white-space:nowrap;line-height:normal;">AS</div>
<div style="position:absolute;left:1135px;top:273px;width:1px;height:28px;background:#bdbdbd;"></div>
<div style="position:absolute;left:1077px;top:275.95px;width:59.5px;text-align:center;font-size:20.5px;color:#262626;font-weight:normal;white-space:nowrap;line-height:normal;">AT</div>
<div style="position:absolute;left:1195px;top:273px;width:1px;height:28px;background:#bdbdbd;"></div>
<div style="position:absolute;left:1136.5px;top:275.95px;width:59.0px;text-align:center;font-size:20.5px;color:#262626;font-weight:normal;white-space:nowrap;line-height:normal;">AU</div>
<div style="position:absolute;left:1212px;top:273px;width:1px;height:28px;background:#bdbdbd;"></div>
<div style="position:absolute;left:1196.5px;top:275.9px;width:15.5px;overflow:hidden;font-size:20.5px;color:#262626;white-space:nowrap;line-height:normal;">AA</div>
<div style="position:absolute;left:1539px;top:273px;width:1px;height:28px;background:#bdbdbd;"></div>
<div style="position:absolute;left:1213px;top:275.95px;width:327px;text-align:center;font-size:20.5px;color:#262626;font-weight:normal;white-space:nowrap;line-height:normal;">AW</div>
<div style="position:absolute;left:1909px;top:273px;width:1px;height:28px;background:#bdbdbd;"></div>
<div style="position:absolute;left:1540px;top:275.95px;width:370px;text-align:center;font-size:20.5px;color:#262626;font-weight:normal;white-space:nowrap;line-height:normal;">AX</div>
<div style="position:absolute;left:1910px;top:273px;width:1px;height:28px;background:#a8a8a8;"></div>
<div style="position:absolute;left:0px;top:301px;width:38px;height:1021px;background:#e6e6e6;"></div>
<div style="position:absolute;left:37px;top:301px;width:1px;height:1021px;background:#bdbdbd;"></div>
<div style="position:absolute;left:0px;top:332px;width:37px;height:1px;background:#bcbcbc;"></div>
<div style="position:absolute;left:0px;top:306.75px;width:38px;text-align:center;font-size:19.5px;color:#262626;font-weight:normal;white-space:nowrap;line-height:normal;">23</div>
<div style="position:absolute;left:0px;top:364px;width:37px;height:1px;background:#bcbcbc;"></div>
<div style="position:absolute;left:0px;top:338.95px;width:38px;text-align:center;font-size:19.5px;color:#262626;font-weight:normal;white-space:nowrap;line-height:normal;">24</div>
<div style="position:absolute;left:0px;top:397px;width:37px;height:1px;background:#bcbcbc;"></div>
<div style="position:absolute;left:0px;top:371.15px;width:38px;text-align:center;font-size:19.5px;color:#262626;font-weight:normal;white-space:nowrap;line-height:normal;">25</div>
<div style="position:absolute;left:0px;top:429px;width:37px;height:1px;background:#bcbcbc;"></div>
<div style="position:absolute;left:0px;top:403.35px;width:38px;text-align:center;font-size:19.5px;color:#262626;font-weight:normal;white-space:nowrap;line-height:normal;">26</div>
<div style="position:absolute;left:0px;top:461px;width:37px;height:1px;background:#bcbcbc;"></div>
<div style="position:absolute;left:0px;top:435.55px;width:38px;text-align:center;font-size:19.5px;color:#262626;font-weight:normal;white-space:nowrap;line-height:normal;">27</div>
<div style="position:absolute;left:0px;top:493px;width:37px;height:1px;background:#bcbcbc;"></div>
<div style="position:absolute;left:0px;top:467.80px;width:38px;text-align:center;font-size:19.5px;color:#262626;font-weight:normal;white-space:nowrap;line-height:normal;">28</div>
<div style="position:absolute;left:0px;top:523px;width:37px;height:1px;background:#bcbcbc;"></div>
<div style="position:absolute;left:0px;top:498.75px;width:38px;text-align:center;font-size:19.5px;color:#262626;font-weight:normal;white-space:nowrap;line-height:normal;">29</div>
<div style="position:absolute;left:0px;top:553px;width:37px;height:1px;background:#bcbcbc;"></div>
<div style="position:absolute;left:0px;top:528.35px;width:38px;text-align:center;font-size:19.5px;color:#262626;font-weight:normal;white-space:nowrap;line-height:normal;">30</div>
<div style="position:absolute;left:0px;top:582px;width:37px;height:1px;background:#bcbcbc;"></div>
<div style="position:absolute;left:0px;top:557.95px;width:38px;text-align:center;font-size:19.5px;color:#262626;font-weight:normal;white-space:nowrap;line-height:normal;">31</div>
<div style="position:absolute;left:0px;top:612px;width:37px;height:1px;background:#bcbcbc;"></div>
<div style="position:absolute;left:0px;top:587.55px;width:38px;text-align:center;font-size:19.5px;color:#262626;font-weight:normal;white-space:nowrap;line-height:normal;">32</div>
<div style="position:absolute;left:0px;top:641px;width:37px;height:1px;background:#bcbcbc;"></div>
<div style="position:absolute;left:0px;top:617.15px;width:38px;text-align:center;font-size:19.5px;color:#262626;font-weight:normal;white-space:nowrap;line-height:normal;">33</div>
<div style="position:absolute;left:0px;top:671px;width:37px;height:1px;background:#bcbcbc;"></div>
<div style="position:absolute;left:0px;top:646.75px;width:38px;text-align:center;font-size:19.5px;color:#262626;font-weight:normal;white-space:nowrap;line-height:normal;">34</div>
<div style="position:absolute;left:0px;top:701px;width:37px;height:1px;background:#bcbcbc;"></div>
<div style="position:absolute;left:0px;top:676.35px;width:38px;text-align:center;font-size:19.5px;color:#262626;font-weight:normal;white-space:nowrap;line-height:normal;">35</div>
<div style="position:absolute;left:0px;top:730px;width:37px;height:1px;background:#bcbcbc;"></div>
<div style="position:absolute;left:0px;top:705.95px;width:38px;text-align:center;font-size:19.5px;color:#262626;font-weight:normal;white-space:nowrap;line-height:normal;">36</div>
<div style="position:absolute;left:0px;top:760px;width:37px;height:1px;background:#bcbcbc;"></div>
<div style="position:absolute;left:0px;top:735.55px;width:38px;text-align:center;font-size:19.5px;color:#262626;font-weight:normal;white-space:nowrap;line-height:normal;">37</div>
<div style="position:absolute;left:0px;top:789px;width:37px;height:1px;background:#bcbcbc;"></div>
<div style="position:absolute;left:0px;top:765.15px;width:38px;text-align:center;font-size:19.5px;color:#262626;font-weight:normal;white-space:nowrap;line-height:normal;">38</div>
<div style="position:absolute;left:0px;top:819px;width:37px;height:1px;background:#bcbcbc;"></div>
<div style="position:absolute;left:0px;top:794.75px;width:38px;text-align:center;font-size:19.5px;color:#262626;font-weight:normal;white-space:nowrap;line-height:normal;">39</div>
<div style="position:absolute;left:0px;top:849px;width:37px;height:1px;background:#bcbcbc;"></div>
<div style="position:absolute;left:0px;top:824.35px;width:38px;text-align:center;font-size:19.5px;color:#262626;font-weight:normal;white-space:nowrap;line-height:normal;">40</div>
<div style="position:absolute;left:0px;top:878px;width:37px;height:1px;background:#bcbcbc;"></div>
<div style="position:absolute;left:0px;top:853.95px;width:38px;text-align:center;font-size:19.5px;color:#262626;font-weight:normal;white-space:nowrap;line-height:normal;">41</div>
<div style="position:absolute;left:0px;top:908px;width:37px;height:1px;background:#bcbcbc;"></div>
<div style="position:absolute;left:0px;top:883.55px;width:38px;text-align:center;font-size:19.5px;color:#262626;font-weight:normal;white-space:nowrap;line-height:normal;">42</div>
<div style="position:absolute;left:0px;top:937px;width:37px;height:1px;background:#bcbcbc;"></div>
<div style="position:absolute;left:0px;top:913.15px;width:38px;text-align:center;font-size:19.5px;color:#262626;font-weight:normal;white-space:nowrap;line-height:normal;">43</div>
<div style="position:absolute;left:0px;top:967px;width:37px;height:1px;background:#bcbcbc;"></div>
<div style="position:absolute;left:0px;top:942.75px;width:38px;text-align:center;font-size:19.5px;color:#262626;font-weight:normal;white-space:nowrap;line-height:normal;">44</div>
<div style="position:absolute;left:0px;top:997px;width:37px;height:1px;background:#bcbcbc;"></div>
<div style="position:absolute;left:0px;top:972.35px;width:38px;text-align:center;font-size:19.5px;color:#262626;font-weight:normal;white-space:nowrap;line-height:normal;">45</div>
<div style="position:absolute;left:0px;top:1026px;width:37px;height:1px;background:#bcbcbc;"></div>
<div style="position:absolute;left:0px;top:1001.95px;width:38px;text-align:center;font-size:19.5px;color:#262626;font-weight:normal;white-space:nowrap;line-height:normal;">46</div>
<div style="position:absolute;left:0px;top:1056px;width:37px;height:1px;background:#bcbcbc;"></div>
<div style="position:absolute;left:0px;top:1031.55px;width:38px;text-align:center;font-size:19.5px;color:#262626;font-weight:normal;white-space:nowrap;line-height:normal;">47</div>
<div style="position:absolute;left:0px;top:1085px;width:37px;height:1px;background:#bcbcbc;"></div>
<div style="position:absolute;left:0px;top:1061.15px;width:38px;text-align:center;font-size:19.5px;color:#262626;font-weight:normal;white-space:nowrap;line-height:normal;">48</div>
<div style="position:absolute;left:0px;top:1115px;width:37px;height:1px;background:#bcbcbc;"></div>
<div style="position:absolute;left:0px;top:1090.75px;width:38px;text-align:center;font-size:19.5px;color:#262626;font-weight:normal;white-space:nowrap;line-height:normal;">49</div>
<div style="position:absolute;left:0px;top:1145px;width:37px;height:1px;background:#bcbcbc;"></div>
<div style="position:absolute;left:0px;top:1120.35px;width:38px;text-align:center;font-size:19.5px;color:#262626;font-weight:normal;white-space:nowrap;line-height:normal;">50</div>
<div style="position:absolute;left:0px;top:1174px;width:37px;height:1px;background:#bcbcbc;"></div>
<div style="position:absolute;left:0px;top:1149.95px;width:38px;text-align:center;font-size:19.5px;color:#262626;font-weight:normal;white-space:nowrap;line-height:normal;">51</div>
<div style="position:absolute;left:0px;top:1204px;width:37px;height:1px;background:#bcbcbc;"></div>
<div style="position:absolute;left:0px;top:1179.55px;width:38px;text-align:center;font-size:19.5px;color:#262626;font-weight:normal;white-space:nowrap;line-height:normal;">52</div>
<div style="position:absolute;left:0px;top:1233px;width:37px;height:1px;background:#bcbcbc;"></div>
<div style="position:absolute;left:0px;top:1209.15px;width:38px;text-align:center;font-size:19.5px;color:#262626;font-weight:normal;white-space:nowrap;line-height:normal;">53</div>
<div style="position:absolute;left:0px;top:1263px;width:37px;height:1px;background:#bcbcbc;"></div>
<div style="position:absolute;left:0px;top:1238.75px;width:38px;text-align:center;font-size:19.5px;color:#262626;font-weight:normal;white-space:nowrap;line-height:normal;">54</div>
<div style="position:absolute;left:0px;top:1292px;width:37px;height:1px;background:#bcbcbc;"></div>
<div style="position:absolute;left:0px;top:1268.35px;width:38px;text-align:center;font-size:19.5px;color:#262626;font-weight:normal;white-space:nowrap;line-height:normal;">55</div>
<div style="position:absolute;left:0px;top:1322px;width:37px;height:1px;background:#bcbcbc;"></div>
<div style="position:absolute;left:0px;top:1297.95px;width:38px;text-align:center;font-size:19.5px;color:#262626;font-weight:normal;white-space:nowrap;line-height:normal;">56</div>
<div style="position:absolute;left:154px;top:306.96px;width:58px;text-align:center;font-size:21px;color:#111;font-weight:normal;white-space:nowrap;line-height:normal;">L</div>
<div style="position:absolute;left:212px;top:306.96px;width:57px;text-align:center;font-size:21px;color:#111;font-weight:normal;white-space:nowrap;line-height:normal;">L</div>
<div style="position:absolute;left:269px;top:301px;width:58px;height:32px;background:transparent;background-image:repeating-linear-gradient(-45deg, rgba(255,192,0,0.42) 0px, rgba(255,192,0,0.42) 1.9px, transparent 1.9px, transparent 3.9px);"></div>
<div style="position:absolute;left:269px;top:306.96px;width:58px;text-align:center;font-size:21px;color:#111;font-weight:normal;white-space:nowrap;line-height:normal;">L</div>
<div style="position:absolute;left:327px;top:301px;width:58px;height:32px;background:transparent;background-image:repeating-linear-gradient(-45deg, rgba(255,192,0,0.42) 0px, rgba(255,192,0,0.42) 1.9px, transparent 1.9px, transparent 3.9px);"></div>
<div style="position:absolute;left:96px;top:333px;width:58px;height:32px;background:#f15bb5;"></div>
<div style="position:absolute;left:96px;top:339.15px;width:58px;text-align:center;font-size:21px;color:#111;font-weight:normal;white-space:nowrap;line-height:normal;">ML</div>
<div style="position:absolute;left:154px;top:333px;width:58px;height:32px;background:#f15bb5;"></div>
<div style="position:absolute;left:154px;top:339.15px;width:58px;text-align:center;font-size:21px;color:#111;font-weight:normal;white-space:nowrap;line-height:normal;">ML</div>
<div style="position:absolute;left:212px;top:333px;width:57px;height:32px;background:#f15bb5;"></div>
<div style="position:absolute;left:212px;top:339.15px;width:57px;text-align:center;font-size:21px;color:#111;font-weight:normal;white-space:nowrap;line-height:normal;">ML</div>
<div style="position:absolute;left:269px;top:333px;width:58px;height:32px;background:#f15bb5;"></div>
<div style="position:absolute;left:269px;top:333px;width:58px;height:32px;background:transparent;background-image:repeating-linear-gradient(-45deg, rgba(255,192,0,0.42) 0px, rgba(255,192,0,0.42) 1.9px, transparent 1.9px, transparent 3.9px);"></div>
<div style="position:absolute;left:269px;top:339.15px;width:58px;text-align:center;font-size:21px;color:#111;font-weight:normal;white-space:nowrap;line-height:normal;">ML</div>
<div style="position:absolute;left:327px;top:333px;width:58px;height:32px;background:#f15bb5;"></div>
<div style="position:absolute;left:327px;top:333px;width:58px;height:32px;background:transparent;background-image:repeating-linear-gradient(-45deg, rgba(255,192,0,0.42) 0px, rgba(255,192,0,0.42) 1.9px, transparent 1.9px, transparent 3.9px);"></div>
<div style="position:absolute;left:327px;top:339.15px;width:58px;text-align:center;font-size:21px;color:#111;font-weight:normal;white-space:nowrap;line-height:normal;">ML</div>
<div style="position:absolute;left:38px;top:365px;width:58px;height:33px;background:#00f0d0;"></div>
<div style="position:absolute;left:38px;top:371.36px;width:58px;text-align:center;font-size:21px;color:#111;font-weight:normal;white-space:nowrap;line-height:normal;">EL</div>
<div style="position:absolute;left:96px;top:365px;width:58px;height:33px;background:#00f0d0;"></div>
<div style="position:absolute;left:96px;top:371.36px;width:58px;text-align:center;font-size:21px;color:#111;font-weight:normal;white-space:nowrap;line-height:normal;">EL</div>
<div style="position:absolute;left:154px;top:365px;width:58px;height:33px;background:#00f0d0;"></div>
<div style="position:absolute;left:154px;top:371.36px;width:58px;text-align:center;font-size:21px;color:#111;font-weight:normal;white-space:nowrap;line-height:normal;">EL</div>
<div style="position:absolute;left:212px;top:365px;width:57px;height:33px;background:#00f0d0;"></div>
<div style="position:absolute;left:212px;top:371.36px;width:57px;text-align:center;font-size:21px;color:#111;font-weight:normal;white-space:nowrap;line-height:normal;">EL</div>
<div style="position:absolute;left:269px;top:365px;width:58px;height:33px;background:#00f0d0;"></div>
<div style="position:absolute;left:269px;top:365px;width:58px;height:33px;background:transparent;background-image:repeating-linear-gradient(-45deg, rgba(255,192,0,0.42) 0px, rgba(255,192,0,0.42) 1.9px, transparent 1.9px, transparent 3.9px);"></div>
<div style="position:absolute;left:269px;top:371.36px;width:58px;text-align:center;font-size:21px;color:#111;font-weight:normal;white-space:nowrap;line-height:normal;">EL</div>
<div style="position:absolute;left:327px;top:365px;width:58px;height:33px;background:#00f0d0;"></div>
<div style="position:absolute;left:327px;top:365px;width:58px;height:33px;background:transparent;background-image:repeating-linear-gradient(-45deg, rgba(255,192,0,0.42) 0px, rgba(255,192,0,0.42) 1.9px, transparent 1.9px, transparent 3.9px);"></div>
<div style="position:absolute;left:327px;top:371.36px;width:58px;text-align:center;font-size:21px;color:#111;font-weight:normal;white-space:nowrap;line-height:normal;">EL</div>
<div style="position:absolute;left:38px;top:398px;width:58px;height:32px;background:#9b5de5;"></div>
<div style="position:absolute;left:38px;top:403.55px;width:58px;text-align:center;font-size:21px;color:#111;font-weight:normal;white-space:nowrap;line-height:normal;">LSL</div>
<div style="position:absolute;left:96px;top:398px;width:58px;height:32px;background:#9b5de5;"></div>
<div style="position:absolute;left:96px;top:403.55px;width:58px;text-align:center;font-size:21px;color:#111;font-weight:normal;white-space:nowrap;line-height:normal;">LSL</div>
<div style="position:absolute;left:154px;top:398px;width:58px;height:32px;background:#9b5de5;"></div>
<div style="position:absolute;left:154px;top:403.55px;width:58px;text-align:center;font-size:21px;color:#111;font-weight:normal;white-space:nowrap;line-height:normal;">LSL</div>
<div style="position:absolute;left:269px;top:398px;width:58px;height:32px;background:transparent;background-image:repeating-linear-gradient(-45deg, rgba(255,192,0,0.42) 0px, rgba(255,192,0,0.42) 1.9px, transparent 1.9px, transparent 3.9px);"></div>
<div style="position:absolute;left:327px;top:398px;width:58px;height:32px;background:transparent;background-image:repeating-linear-gradient(-45deg, rgba(255,192,0,0.42) 0px, rgba(255,192,0,0.42) 1.9px, transparent 1.9px, transparent 3.9px);"></div>
<div style="position:absolute;left:269px;top:430px;width:58px;height:32px;background:transparent;background-image:repeating-linear-gradient(-45deg, rgba(255,192,0,0.42) 0px, rgba(255,192,0,0.42) 1.9px, transparent 1.9px, transparent 3.9px);"></div>
<div style="position:absolute;left:327px;top:430px;width:58px;height:32px;background:transparent;background-image:repeating-linear-gradient(-45deg, rgba(255,192,0,0.42) 0px, rgba(255,192,0,0.42) 1.9px, transparent 1.9px, transparent 3.9px);"></div>
<div style="position:absolute;left:95px;top:301px;width:2px;height:160px;background:#2a2a2a;"></div>
<div style="position:absolute;left:153px;top:301px;width:2px;height:160px;background:#2a2a2a;"></div>
<div style="position:absolute;left:211px;top:301px;width:2px;height:160px;background:#2a2a2a;"></div>
<div style="position:absolute;left:268px;top:301px;width:2px;height:160px;background:#2a2a2a;"></div>
<div style="position:absolute;left:326px;top:301px;width:2px;height:160px;background:#2a2a2a;"></div>
<div style="position:absolute;left:384px;top:301px;width:2px;height:160px;background:#2a2a2a;"></div>
<div style="position:absolute;left:442px;top:301px;width:2px;height:160px;background:#2a2a2a;"></div>
<div style="position:absolute;left:500px;top:301px;width:2px;height:160px;background:#2a2a2a;"></div>
<div style="position:absolute;left:558px;top:301px;width:2px;height:160px;background:#2a2a2a;"></div>
<div style="position:absolute;left:615px;top:301px;width:2px;height:160px;background:#2a2a2a;"></div>
<div style="position:absolute;left:38px;top:332px;width:636px;height:2px;background:#2a2a2a;"></div>
<div style="position:absolute;left:38px;top:364px;width:636px;height:2px;background:#2a2a2a;"></div>
<div style="position:absolute;left:38px;top:397px;width:636px;height:2px;background:#2a2a2a;"></div>
<div style="position:absolute;left:38px;top:429px;width:636px;height:2px;background:#2a2a2a;"></div>
<div style="position:absolute;left:673px;top:301px;width:1px;height:161px;background:#7d8694;"></div>
<div style="position:absolute;left:674px;top:301px;width:2px;height:163px;background:#c8ced6;"></div>
<div style="position:absolute;left:676px;top:301px;width:1px;height:164px;background:#7d8694;"></div>
<div style="position:absolute;left:38px;top:460px;width:636px;height:1px;background:#7d8694;"></div>
<div style="position:absolute;left:38px;top:461px;width:638px;height:2px;background:#c8ced6;"></div>
<div style="position:absolute;left:38px;top:463px;width:639px;height:1px;background:#7d8694;"></div>
<div style="position:absolute;left:693px;top:302px;width:55px;height:30px;background:#c0eefb;"></div>
<div style="position:absolute;left:692px;top:306.87px;width:57px;text-align:center;font-size:19.5px;color:#111;font-weight:normal;white-space:nowrap;line-height:normal;">10</div>
<div style="position:absolute;left:750px;top:302px;width:57px;height:30px;background:#9fe0f2;"></div>
<div style="position:absolute;left:749px;top:306.87px;width:59px;text-align:center;font-size:19.5px;color:#111;font-weight:normal;white-space:nowrap;line-height:normal;">65</div>
<div style="position:absolute;left:809px;top:302px;width:57px;height:30px;background:#a0d4e4;"></div>
<div style="position:absolute;left:808px;top:306.87px;width:59px;text-align:center;font-size:19.5px;color:#111;font-weight:normal;white-space:nowrap;line-height:normal;">110</div>
<div style="position:absolute;left:693px;top:334px;width:55px;height:30px;background:#c0eefb;"></div>
<div style="position:absolute;left:692px;top:339.07px;width:57px;text-align:center;font-size:19.5px;color:#111;font-weight:normal;white-space:nowrap;line-height:normal;">0</div>
<div style="position:absolute;left:750px;top:334px;width:57px;height:30px;background:#9fe0f2;"></div>
<div style="position:absolute;left:749px;top:339.07px;width:59px;text-align:center;font-size:19.5px;color:#111;font-weight:normal;white-space:nowrap;line-height:normal;">80</div>
<div style="position:absolute;left:809px;top:334px;width:57px;height:30px;background:#a0d4e4;"></div>
<div style="position:absolute;left:808px;top:339.07px;width:59px;text-align:center;font-size:19.5px;color:#111;font-weight:normal;white-space:nowrap;line-height:normal;">141</div>
<div style="position:absolute;left:693px;top:366px;width:55px;height:31px;background:#c0eefb;"></div>
<div style="position:absolute;left:692px;top:371.27px;width:57px;text-align:center;font-size:19.5px;color:#111;font-weight:normal;white-space:nowrap;line-height:normal;">0</div>
<div style="position:absolute;left:750px;top:366px;width:57px;height:31px;background:#9fe0f2;"></div>
<div style="position:absolute;left:749px;top:371.27px;width:59px;text-align:center;font-size:19.5px;color:#111;font-weight:normal;white-space:nowrap;line-height:normal;">48</div>
<div style="position:absolute;left:809px;top:366px;width:57px;height:31px;background:#a0d4e4;"></div>
<div style="position:absolute;left:808px;top:371.27px;width:59px;text-align:center;font-size:19.5px;color:#111;font-weight:normal;white-space:nowrap;line-height:normal;">128</div>
<div style="position:absolute;left:693px;top:399px;width:55px;height:30px;background:#c0eefb;"></div>
<div style="position:absolute;left:692px;top:403.47px;width:57px;text-align:center;font-size:19.5px;color:#111;font-weight:normal;white-space:nowrap;line-height:normal;">0</div>
<div style="position:absolute;left:750px;top:399px;width:57px;height:30px;background:#9fe0f2;"></div>
<div style="position:absolute;left:749px;top:403.47px;width:59px;text-align:center;font-size:19.5px;color:#111;font-weight:normal;white-space:nowrap;line-height:normal;">80</div>
<div style="position:absolute;left:809px;top:399px;width:57px;height:30px;background:#a0d4e4;"></div>
<div style="position:absolute;left:808px;top:403.47px;width:59px;text-align:center;font-size:19.5px;color:#111;font-weight:normal;white-space:nowrap;line-height:normal;">128</div>
<div style="position:absolute;left:693px;top:431px;width:55px;height:30px;background:#c0eefb;"></div>
<div style="position:absolute;left:692px;top:435.67px;width:57px;text-align:center;font-size:19.5px;color:#111;font-weight:normal;white-space:nowrap;line-height:normal;">0</div>
<div style="position:absolute;left:750px;top:431px;width:57px;height:30px;background:#9fe0f2;"></div>
<div style="position:absolute;left:749px;top:435.67px;width:59px;text-align:center;font-size:19.5px;color:#111;font-weight:normal;white-space:nowrap;line-height:normal;">0</div>
<div style="position:absolute;left:809px;top:431px;width:57px;height:30px;background:#a0d4e4;"></div>
<div style="position:absolute;left:808px;top:435.67px;width:59px;text-align:center;font-size:19.5px;color:#111;font-weight:normal;white-space:nowrap;line-height:normal;">0</div>
<div style="position:absolute;left:901px;top:302px;width:56px;height:30px;background:#cce8f4;"></div>
<div style="position:absolute;left:900px;top:306.87px;width:58px;text-align:center;font-size:19.5px;color:#111;font-weight:normal;white-space:nowrap;line-height:normal;">0</div>
<div style="position:absolute;left:959px;top:302px;width:58px;height:30px;background:#cce8f4;"></div>
<div style="position:absolute;left:958px;top:306.87px;width:60px;text-align:center;font-size:19.5px;color:#111;font-weight:normal;white-space:nowrap;line-height:normal;">0</div>
<div style="position:absolute;left:1019px;top:302px;width:57px;height:30px;background:#cce8f4;"></div>
<div style="position:absolute;left:1018px;top:306.87px;width:59px;text-align:center;font-size:19.5px;color:#111;font-weight:normal;white-space:nowrap;line-height:normal;">0</div>
<div style="position:absolute;left:1078px;top:302px;width:57px;height:30px;background:#cce8f4;"></div>
<div style="position:absolute;left:1077px;top:306.87px;width:59px;text-align:center;font-size:19.5px;color:#111;font-weight:normal;white-space:nowrap;line-height:normal;">0</div>
<div style="position:absolute;left:1137px;top:302px;width:58px;height:30px;background:#cce8f4;"></div>
<div style="position:absolute;left:1136px;top:306.87px;width:60px;text-align:center;font-size:19.5px;color:#111;font-weight:normal;white-space:nowrap;line-height:normal;">0</div>
<div style="position:absolute;left:901px;top:334px;width:56px;height:30px;background:#cce8f4;"></div>
<div style="position:absolute;left:900px;top:339.07px;width:58px;text-align:center;font-size:19.5px;color:#111;font-weight:normal;white-space:nowrap;line-height:normal;">0</div>
<div style="position:absolute;left:959px;top:334px;width:58px;height:30px;background:#cce8f4;"></div>
<div style="position:absolute;left:958px;top:339.07px;width:60px;text-align:center;font-size:19.5px;color:#111;font-weight:normal;white-space:nowrap;line-height:normal;">0</div>
<div style="position:absolute;left:1019px;top:334px;width:57px;height:30px;background:#cce8f4;"></div>
<div style="position:absolute;left:1018px;top:339.07px;width:59px;text-align:center;font-size:19.5px;color:#111;font-weight:normal;white-space:nowrap;line-height:normal;">17</div>
<div style="position:absolute;left:1078px;top:334px;width:57px;height:30px;background:#cce8f4;"></div>
<div style="position:absolute;left:1077px;top:339.07px;width:59px;text-align:center;font-size:19.5px;color:#111;font-weight:normal;white-space:nowrap;line-height:normal;">0</div>
<div style="position:absolute;left:1137px;top:334px;width:58px;height:30px;background:#cce8f4;"></div>
<div style="position:absolute;left:1136px;top:339.07px;width:60px;text-align:center;font-size:19.5px;color:#111;font-weight:normal;white-space:nowrap;line-height:normal;">0</div>
<div style="position:absolute;left:901px;top:366px;width:56px;height:31px;background:#cce8f4;"></div>
<div style="position:absolute;left:900px;top:371.27px;width:58px;text-align:center;font-size:19.5px;color:#111;font-weight:normal;white-space:nowrap;line-height:normal;">0</div>
<div style="position:absolute;left:959px;top:366px;width:58px;height:31px;background:#cce8f4;"></div>
<div style="position:absolute;left:958px;top:371.27px;width:60px;text-align:center;font-size:19.5px;color:#111;font-weight:normal;white-space:nowrap;line-height:normal;">0</div>
<div style="position:absolute;left:1019px;top:366px;width:57px;height:31px;background:#cce8f4;"></div>
<div style="position:absolute;left:1018px;top:371.27px;width:59px;text-align:center;font-size:19.5px;color:#111;font-weight:normal;white-space:nowrap;line-height:normal;">0</div>
<div style="position:absolute;left:1078px;top:366px;width:57px;height:31px;background:#cce8f4;"></div>
<div style="position:absolute;left:1077px;top:371.27px;width:59px;text-align:center;font-size:19.5px;color:#111;font-weight:normal;white-space:nowrap;line-height:normal;">16</div>
<div style="position:absolute;left:1137px;top:366px;width:58px;height:31px;background:#cce8f4;"></div>
<div style="position:absolute;left:1136px;top:371.27px;width:60px;text-align:center;font-size:19.5px;color:#111;font-weight:normal;white-space:nowrap;line-height:normal;">0</div>
<div style="position:absolute;left:901px;top:399px;width:56px;height:30px;background:#cce8f4;"></div>
<div style="position:absolute;left:900px;top:403.47px;width:58px;text-align:center;font-size:19.5px;color:#111;font-weight:normal;white-space:nowrap;line-height:normal;">0</div>
<div style="position:absolute;left:959px;top:399px;width:58px;height:30px;background:#cce8f4;"></div>
<div style="position:absolute;left:958px;top:403.47px;width:60px;text-align:center;font-size:19.5px;color:#111;font-weight:normal;white-space:nowrap;line-height:normal;">0</div>
<div style="position:absolute;left:1019px;top:399px;width:57px;height:30px;background:#cce8f4;"></div>
<div style="position:absolute;left:1018px;top:403.47px;width:59px;text-align:center;font-size:19.5px;color:#111;font-weight:normal;white-space:nowrap;line-height:normal;">0</div>
<div style="position:absolute;left:1078px;top:399px;width:57px;height:30px;background:#cce8f4;"></div>
<div style="position:absolute;left:1077px;top:403.47px;width:59px;text-align:center;font-size:19.5px;color:#111;font-weight:normal;white-space:nowrap;line-height:normal;">0</div>
<div style="position:absolute;left:1137px;top:399px;width:58px;height:30px;background:#cce8f4;"></div>
<div style="position:absolute;left:1136px;top:403.47px;width:60px;text-align:center;font-size:19.5px;color:#111;font-weight:normal;white-space:nowrap;line-height:normal;">16</div>
<div style="position:absolute;left:901px;top:431px;width:56px;height:30px;background:#cce8f4;"></div>
<div style="position:absolute;left:900px;top:435.67px;width:58px;text-align:center;font-size:19.5px;color:#111;font-weight:normal;white-space:nowrap;line-height:normal;">0</div>
<div style="position:absolute;left:959px;top:431px;width:58px;height:30px;background:#cce8f4;"></div>
<div style="position:absolute;left:958px;top:435.67px;width:60px;text-align:center;font-size:19.5px;color:#111;font-weight:normal;white-space:nowrap;line-height:normal;">0</div>
<div style="position:absolute;left:1019px;top:431px;width:57px;height:30px;background:#cce8f4;"></div>
<div style="position:absolute;left:1018px;top:435.67px;width:59px;text-align:center;font-size:19.5px;color:#111;font-weight:normal;white-space:nowrap;line-height:normal;">0</div>
<div style="position:absolute;left:1078px;top:431px;width:57px;height:30px;background:#cce8f4;"></div>
<div style="position:absolute;left:1077px;top:435.67px;width:59px;text-align:center;font-size:19.5px;color:#111;font-weight:normal;white-space:nowrap;line-height:normal;">0</div>
<div style="position:absolute;left:1137px;top:431px;width:58px;height:30px;background:#cce8f4;"></div>
<div style="position:absolute;left:1136px;top:435.67px;width:60px;text-align:center;font-size:19.5px;color:#111;font-weight:normal;white-space:nowrap;line-height:normal;">0</div>
<div style="position:absolute;left:1213px;top:301px;width:697px;height:161px;background:#cce8f4;"></div>
<div style="position:absolute;left:1213px;top:332px;width:697px;height:2px;background-image:repeating-linear-gradient(90deg,#fff 0,#fff 14px,transparent 14px,transparent 17px,#fff 17px,#fff 21px,transparent 21px,transparent 24px);"></div>
<div style="position:absolute;left:1213px;top:364px;width:697px;height:2px;background-image:repeating-linear-gradient(90deg,#fff 0,#fff 14px,transparent 14px,transparent 17px,#fff 17px,#fff 21px,transparent 21px,transparent 24px);"></div>
<div style="position:absolute;left:1213px;top:397px;width:697px;height:2px;background-image:repeating-linear-gradient(90deg,#fff 0,#fff 14px,transparent 14px,transparent 17px,#fff 17px,#fff 21px,transparent 21px,transparent 24px);"></div>
<div style="position:absolute;left:1213px;top:429px;width:697px;height:2px;background-image:repeating-linear-gradient(90deg,#fff 0,#fff 14px,transparent 14px,transparent 17px,#fff 17px,#fff 21px,transparent 21px,transparent 24px);"></div>
<div style="position:absolute;left:1213px;top:301px;width:1.4px;height:161px;background-image:repeating-linear-gradient(180deg,#333 0,#333 8px,transparent 8px,transparent 11px,#333 11px,#333 13px,transparent 13px,transparent 16px);"></div>
<div style="position:absolute;left:1213px;top:461px;width:697px;height:1px;background-image:repeating-linear-gradient(90deg,#9ab 0,#9ab 4px,transparent 4px,transparent 8px);opacity:.6"></div>
<svg style="position:absolute;left:1189px;top:455px;" width="6" height="6" viewBox="0 0 6 6"><path d="M5 0v5H0" fill="none" stroke="#3346a0" stroke-width="2"/></svg>
<div style="position:absolute;left:39px;top:494px;width:635px;height:29px;background:#ffe699;"></div>
<div style="position:absolute;left:39px;top:525px;width:57px;height:29px;background:#ffe699;"></div>
<div style="position:absolute;left:38px;top:528.89px;width:58px;text-align:center;font-size:18px;color:#111;font-weight:normal;white-space:nowrap;line-height:normal;">0</div>
<div style="position:absolute;left:97px;top:525px;width:57px;height:29px;background:#ffe699;"></div>
<div style="position:absolute;left:96px;top:528.89px;width:58px;text-align:center;font-size:18px;color:#111;font-weight:normal;white-space:nowrap;line-height:normal;">0</div>
<div style="position:absolute;left:155px;top:525px;width:57px;height:29px;background:#ffe699;"></div>
<div style="position:absolute;left:154px;top:528.89px;width:58px;text-align:center;font-size:18px;color:#111;font-weight:normal;white-space:nowrap;line-height:normal;">0</div>
<div style="position:absolute;left:213px;top:525px;width:56px;height:29px;background:#ffe699;"></div>
<div style="position:absolute;left:212px;top:528.89px;width:57px;text-align:center;font-size:18px;color:#111;font-weight:normal;white-space:nowrap;line-height:normal;">0</div>
<div style="position:absolute;left:270px;top:525px;width:57px;height:29px;background:#ffe699;"></div>
<div style="position:absolute;left:269px;top:528.89px;width:58px;text-align:center;font-size:18px;color:#111;font-weight:normal;white-space:nowrap;line-height:normal;">0</div>
<div style="position:absolute;left:328px;top:525px;width:57px;height:29px;background:#ffe699;"></div>
<div style="position:absolute;left:327px;top:528.89px;width:58px;text-align:center;font-size:18px;color:#111;font-weight:normal;white-space:nowrap;line-height:normal;">0</div>
<div style="position:absolute;left:386px;top:525px;width:57px;height:29px;background:#ffe699;"></div>
<div style="position:absolute;left:385px;top:528.89px;width:58px;text-align:center;font-size:18px;color:#111;font-weight:normal;white-space:nowrap;line-height:normal;">0</div>
<div style="position:absolute;left:444px;top:525px;width:57px;height:29px;background:#ffe699;"></div>
<div style="position:absolute;left:443px;top:528.89px;width:58px;text-align:center;font-size:18px;color:#111;font-weight:normal;white-space:nowrap;line-height:normal;">0</div>
<div style="position:absolute;left:502px;top:525px;width:57px;height:29px;background:#ffe699;"></div>
<div style="position:absolute;left:501px;top:528.89px;width:58px;text-align:center;font-size:18px;color:#111;font-weight:normal;white-space:nowrap;line-height:normal;">0</div>
<div style="position:absolute;left:560px;top:525px;width:56px;height:29px;background:#ffe699;"></div>
<div style="position:absolute;left:559px;top:528.89px;width:57px;text-align:center;font-size:18px;color:#111;font-weight:normal;white-space:nowrap;line-height:normal;">0</div>
<div style="position:absolute;left:617px;top:525px;width:57px;height:29px;background:#ffe699;"></div>
<div style="position:absolute;left:616px;top:528.89px;width:58px;text-align:center;font-size:18px;color:#111;font-weight:normal;white-space:nowrap;line-height:normal;">0</div>
<div style="position:absolute;left:39px;top:555px;width:57px;height:28px;background:#ffe699;"></div>
<div style="position:absolute;left:38px;top:558.49px;width:58px;text-align:center;font-size:18px;color:#111;font-weight:normal;white-space:nowrap;line-height:normal;">0</div>
<div style="position:absolute;left:97px;top:555px;width:57px;height:28px;background:#ffe699;"></div>
<div style="position:absolute;left:96px;top:558.49px;width:58px;text-align:center;font-size:18px;color:#111;font-weight:normal;white-space:nowrap;line-height:normal;">0</div>
<div style="position:absolute;left:155px;top:555px;width:57px;height:28px;background:#ffe699;"></div>
<div style="position:absolute;left:154px;top:558.49px;width:58px;text-align:center;font-size:18px;color:#111;font-weight:normal;white-space:nowrap;line-height:normal;">0</div>
<div style="position:absolute;left:213px;top:555px;width:56px;height:28px;background:#ffe699;"></div>
<div style="position:absolute;left:212px;top:558.49px;width:57px;text-align:center;font-size:18px;color:#111;font-weight:normal;white-space:nowrap;line-height:normal;">0</div>
<div style="position:absolute;left:270px;top:555px;width:57px;height:28px;background:#ffe699;"></div>
<div style="position:absolute;left:269px;top:558.49px;width:58px;text-align:center;font-size:18px;color:#111;font-weight:normal;white-space:nowrap;line-height:normal;">0</div>
<div style="position:absolute;left:328px;top:555px;width:57px;height:28px;background:#ffe699;"></div>
<div style="position:absolute;left:327px;top:558.49px;width:58px;text-align:center;font-size:18px;color:#111;font-weight:normal;white-space:nowrap;line-height:normal;">0</div>
<div style="position:absolute;left:386px;top:555px;width:57px;height:28px;background:#ffe699;"></div>
<div style="position:absolute;left:385px;top:558.49px;width:58px;text-align:center;font-size:18px;color:#111;font-weight:normal;white-space:nowrap;line-height:normal;">0</div>
<div style="position:absolute;left:444px;top:555px;width:57px;height:28px;background:#ffe699;"></div>
<div style="position:absolute;left:443px;top:558.49px;width:58px;text-align:center;font-size:18px;color:#111;font-weight:normal;white-space:nowrap;line-height:normal;">0</div>
<div style="position:absolute;left:502px;top:555px;width:57px;height:28px;background:#ffe699;"></div>
<div style="position:absolute;left:501px;top:558.49px;width:58px;text-align:center;font-size:18px;color:#111;font-weight:normal;white-space:nowrap;line-height:normal;">0</div>
<div style="position:absolute;left:560px;top:555px;width:56px;height:28px;background:#ffe699;"></div>
<div style="position:absolute;left:559px;top:558.49px;width:57px;text-align:center;font-size:18px;color:#111;font-weight:normal;white-space:nowrap;line-height:normal;">0</div>
<div style="position:absolute;left:617px;top:555px;width:57px;height:28px;background:#ffe699;"></div>
<div style="position:absolute;left:616px;top:558.49px;width:58px;text-align:center;font-size:18px;color:#111;font-weight:normal;white-space:nowrap;line-height:normal;">0</div>
<div style="position:absolute;left:39px;top:584px;width:57px;height:29px;background:#ffe699;"></div>
<div style="position:absolute;left:38px;top:588.09px;width:58px;text-align:center;font-size:18px;color:#111;font-weight:normal;white-space:nowrap;line-height:normal;">1</div>
<div style="position:absolute;left:97px;top:584px;width:57px;height:29px;background:#ffe699;"></div>
<div style="position:absolute;left:96px;top:588.09px;width:58px;text-align:center;font-size:18px;color:#111;font-weight:normal;white-space:nowrap;line-height:normal;">0</div>
<div style="position:absolute;left:155px;top:584px;width:57px;height:29px;background:#ffe699;"></div>
<div style="position:absolute;left:154px;top:588.09px;width:58px;text-align:center;font-size:18px;color:#111;font-weight:normal;white-space:nowrap;line-height:normal;">0</div>
<div style="position:absolute;left:213px;top:584px;width:56px;height:29px;background:#ffe699;"></div>
<div style="position:absolute;left:212px;top:588.09px;width:57px;text-align:center;font-size:18px;color:#111;font-weight:normal;white-space:nowrap;line-height:normal;">0</div>
<div style="position:absolute;left:270px;top:584px;width:57px;height:29px;background:#ffe699;"></div>
<div style="position:absolute;left:269px;top:588.09px;width:58px;text-align:center;font-size:18px;color:#111;font-weight:normal;white-space:nowrap;line-height:normal;">0</div>
<div style="position:absolute;left:328px;top:584px;width:57px;height:29px;background:#ffe699;"></div>
<div style="position:absolute;left:327px;top:588.09px;width:58px;text-align:center;font-size:18px;color:#111;font-weight:normal;white-space:nowrap;line-height:normal;">0</div>
<div style="position:absolute;left:386px;top:584px;width:57px;height:29px;background:#ffe699;"></div>
<div style="position:absolute;left:385px;top:588.09px;width:58px;text-align:center;font-size:18px;color:#111;font-weight:normal;white-space:nowrap;line-height:normal;">0</div>
<div style="position:absolute;left:444px;top:584px;width:57px;height:29px;background:#ffe699;"></div>
<div style="position:absolute;left:443px;top:588.09px;width:58px;text-align:center;font-size:18px;color:#111;font-weight:normal;white-space:nowrap;line-height:normal;">0</div>
<div style="position:absolute;left:502px;top:584px;width:57px;height:29px;background:#ffe699;"></div>
<div style="position:absolute;left:501px;top:588.09px;width:58px;text-align:center;font-size:18px;color:#111;font-weight:normal;white-space:nowrap;line-height:normal;">0</div>
<div style="position:absolute;left:560px;top:584px;width:56px;height:29px;background:#ffe699;"></div>
<div style="position:absolute;left:559px;top:588.09px;width:57px;text-align:center;font-size:18px;color:#111;font-weight:normal;white-space:nowrap;line-height:normal;">0</div>
<div style="position:absolute;left:617px;top:584px;width:57px;height:29px;background:#ffe699;"></div>
<div style="position:absolute;left:616px;top:588.09px;width:58px;text-align:center;font-size:18px;color:#111;font-weight:normal;white-space:nowrap;line-height:normal;">0</div>
<div style="position:absolute;left:39px;top:614px;width:57px;height:28px;background:#ffe699;"></div>
<div style="position:absolute;left:38px;top:617.69px;width:58px;text-align:center;font-size:18px;color:#111;font-weight:normal;white-space:nowrap;line-height:normal;">0</div>
<div style="position:absolute;left:97px;top:614px;width:57px;height:28px;background:#ffe699;"></div>
<div style="position:absolute;left:96px;top:617.69px;width:58px;text-align:center;font-size:18px;color:#111;font-weight:normal;white-space:nowrap;line-height:normal;">0</div>
<div style="position:absolute;left:155px;top:614px;width:57px;height:28px;background:#ffe699;"></div>
<div style="position:absolute;left:154px;top:617.69px;width:58px;text-align:center;font-size:18px;color:#111;font-weight:normal;white-space:nowrap;line-height:normal;">0</div>
<div style="position:absolute;left:213px;top:614px;width:56px;height:28px;background:#ffe699;"></div>
<div style="position:absolute;left:212px;top:617.69px;width:57px;text-align:center;font-size:18px;color:#111;font-weight:normal;white-space:nowrap;line-height:normal;">0</div>
<div style="position:absolute;left:270px;top:614px;width:57px;height:28px;background:#ffe699;"></div>
<div style="position:absolute;left:269px;top:617.69px;width:58px;text-align:center;font-size:18px;color:#111;font-weight:normal;white-space:nowrap;line-height:normal;">0</div>
<div style="position:absolute;left:328px;top:614px;width:57px;height:28px;background:#ffe699;"></div>
<div style="position:absolute;left:327px;top:617.69px;width:58px;text-align:center;font-size:18px;color:#111;font-weight:normal;white-space:nowrap;line-height:normal;">0</div>
<div style="position:absolute;left:386px;top:614px;width:57px;height:28px;background:#ffe699;"></div>
<div style="position:absolute;left:385px;top:617.69px;width:58px;text-align:center;font-size:18px;color:#111;font-weight:normal;white-space:nowrap;line-height:normal;">0</div>
<div style="position:absolute;left:444px;top:614px;width:57px;height:28px;background:#ffe699;"></div>
<div style="position:absolute;left:443px;top:617.69px;width:58px;text-align:center;font-size:18px;color:#111;font-weight:normal;white-space:nowrap;line-height:normal;">0</div>
<div style="position:absolute;left:502px;top:614px;width:57px;height:28px;background:#ffe699;"></div>
<div style="position:absolute;left:501px;top:617.69px;width:58px;text-align:center;font-size:18px;color:#111;font-weight:normal;white-space:nowrap;line-height:normal;">0</div>
<div style="position:absolute;left:560px;top:614px;width:56px;height:28px;background:#ffe699;"></div>
<div style="position:absolute;left:559px;top:617.69px;width:57px;text-align:center;font-size:18px;color:#111;font-weight:normal;white-space:nowrap;line-height:normal;">0</div>
<div style="position:absolute;left:617px;top:614px;width:57px;height:28px;background:#ffe699;"></div>
<div style="position:absolute;left:616px;top:617.69px;width:58px;text-align:center;font-size:18px;color:#111;font-weight:normal;white-space:nowrap;line-height:normal;">0</div>
<div style="position:absolute;left:39px;top:643px;width:57px;height:29px;background:#ffe699;"></div>
<div style="position:absolute;left:38px;top:647.29px;width:58px;text-align:center;font-size:18px;color:#111;font-weight:normal;white-space:nowrap;line-height:normal;">1</div>
<div style="position:absolute;left:97px;top:643px;width:57px;height:29px;background:#ffe699;"></div>
<div style="position:absolute;left:96px;top:647.29px;width:58px;text-align:center;font-size:18px;color:#111;font-weight:normal;white-space:nowrap;line-height:normal;">0</div>
<div style="position:absolute;left:155px;top:643px;width:57px;height:29px;background:#ffe699;"></div>
<div style="position:absolute;left:154px;top:647.29px;width:58px;text-align:center;font-size:18px;color:#111;font-weight:normal;white-space:nowrap;line-height:normal;">0</div>
<div style="position:absolute;left:213px;top:643px;width:56px;height:29px;background:#ffe699;"></div>
<div style="position:absolute;left:212px;top:647.29px;width:57px;text-align:center;font-size:18px;color:#111;font-weight:normal;white-space:nowrap;line-height:normal;">0</div>
<div style="position:absolute;left:270px;top:643px;width:57px;height:29px;background:#ffe699;"></div>
<div style="position:absolute;left:269px;top:647.29px;width:58px;text-align:center;font-size:18px;color:#111;font-weight:normal;white-space:nowrap;line-height:normal;">0</div>
<div style="position:absolute;left:328px;top:643px;width:57px;height:29px;background:#ffe699;"></div>
<div style="position:absolute;left:327px;top:647.29px;width:58px;text-align:center;font-size:18px;color:#111;font-weight:normal;white-space:nowrap;line-height:normal;">0</div>
<div style="position:absolute;left:386px;top:643px;width:57px;height:29px;background:#ffe699;"></div>
<div style="position:absolute;left:385px;top:647.29px;width:58px;text-align:center;font-size:18px;color:#111;font-weight:normal;white-space:nowrap;line-height:normal;">0</div>
<div style="position:absolute;left:444px;top:643px;width:57px;height:29px;background:#ffe699;"></div>
<div style="position:absolute;left:443px;top:647.29px;width:58px;text-align:center;font-size:18px;color:#111;font-weight:normal;white-space:nowrap;line-height:normal;">0</div>
<div style="position:absolute;left:502px;top:643px;width:57px;height:29px;background:#ffe699;"></div>
<div style="position:absolute;left:501px;top:647.29px;width:58px;text-align:center;font-size:18px;color:#111;font-weight:normal;white-space:nowrap;line-height:normal;">0</div>
<div style="position:absolute;left:560px;top:643px;width:56px;height:29px;background:#ffe699;"></div>
<div style="position:absolute;left:559px;top:647.29px;width:57px;text-align:center;font-size:18px;color:#111;font-weight:normal;white-space:nowrap;line-height:normal;">0</div>
<div style="position:absolute;left:617px;top:643px;width:57px;height:29px;background:#ffe699;"></div>
<div style="position:absolute;left:616px;top:647.29px;width:58px;text-align:center;font-size:18px;color:#111;font-weight:normal;white-space:nowrap;line-height:normal;">0</div>
<div style="position:absolute;left:39px;top:702px;width:635px;height:28px;background:#d9e1f2;"></div>
<div style="position:absolute;left:39px;top:732px;width:57px;height:29px;background:#d9e1f2;"></div>
<div style="position:absolute;left:38px;top:736.09px;width:58px;text-align:center;font-size:18px;color:#111;font-weight:normal;white-space:nowrap;line-height:normal;">0</div>
<div style="position:absolute;left:97px;top:732px;width:57px;height:29px;background:#d9e1f2;"></div>
<div style="position:absolute;left:96px;top:736.09px;width:58px;text-align:center;font-size:18px;color:#111;font-weight:normal;white-space:nowrap;line-height:normal;">1</div>
<div style="position:absolute;left:155px;top:732px;width:57px;height:29px;background:#d9e1f2;"></div>
<div style="position:absolute;left:154px;top:736.09px;width:58px;text-align:center;font-size:18px;color:#111;font-weight:normal;white-space:nowrap;line-height:normal;">1</div>
<div style="position:absolute;left:213px;top:732px;width:56px;height:29px;background:#d9e1f2;"></div>
<div style="position:absolute;left:212px;top:736.09px;width:57px;text-align:center;font-size:18px;color:#111;font-weight:normal;white-space:nowrap;line-height:normal;">1</div>
<div style="position:absolute;left:270px;top:732px;width:57px;height:29px;background:#d9e1f2;"></div>
<div style="position:absolute;left:269px;top:736.09px;width:58px;text-align:center;font-size:18px;color:#111;font-weight:normal;white-space:nowrap;line-height:normal;">1</div>
<div style="position:absolute;left:328px;top:732px;width:57px;height:29px;background:#d9e1f2;"></div>
<div style="position:absolute;left:327px;top:736.09px;width:58px;text-align:center;font-size:18px;color:#111;font-weight:normal;white-space:nowrap;line-height:normal;">1</div>
<div style="position:absolute;left:386px;top:732px;width:57px;height:29px;background:#d9e1f2;"></div>
<div style="position:absolute;left:385px;top:736.09px;width:58px;text-align:center;font-size:18px;color:#111;font-weight:normal;white-space:nowrap;line-height:normal;">2</div>
<div style="position:absolute;left:444px;top:732px;width:57px;height:29px;background:#d9e1f2;"></div>
<div style="position:absolute;left:443px;top:736.09px;width:58px;text-align:center;font-size:18px;color:#111;font-weight:normal;white-space:nowrap;line-height:normal;">1</div>
<div style="position:absolute;left:502px;top:732px;width:57px;height:29px;background:#d9e1f2;"></div>
<div style="position:absolute;left:501px;top:736.09px;width:58px;text-align:center;font-size:18px;color:#111;font-weight:normal;white-space:nowrap;line-height:normal;">0</div>
<div style="position:absolute;left:560px;top:732px;width:56px;height:29px;background:#d9e1f2;"></div>
<div style="position:absolute;left:559px;top:736.09px;width:57px;text-align:center;font-size:18px;color:#111;font-weight:normal;white-space:nowrap;line-height:normal;">0</div>
<div style="position:absolute;left:617px;top:732px;width:57px;height:29px;background:#d9e1f2;"></div>
<div style="position:absolute;left:616px;top:736.09px;width:58px;text-align:center;font-size:18px;color:#111;font-weight:normal;white-space:nowrap;line-height:normal;">0</div>
<div style="position:absolute;left:39px;top:762px;width:57px;height:28px;background:#d9e1f2;"></div>
<div style="position:absolute;left:38px;top:765.69px;width:58px;text-align:center;font-size:18px;color:#111;font-weight:normal;white-space:nowrap;line-height:normal;">0</div>
<div style="position:absolute;left:97px;top:762px;width:57px;height:28px;background:#d9e1f2;"></div>
<div style="position:absolute;left:96px;top:765.69px;width:58px;text-align:center;font-size:18px;color:#111;font-weight:normal;white-space:nowrap;line-height:normal;">1</div>
<div style="position:absolute;left:155px;top:762px;width:57px;height:28px;background:#d9e1f2;"></div>
<div style="position:absolute;left:154px;top:765.69px;width:58px;text-align:center;font-size:18px;color:#111;font-weight:normal;white-space:nowrap;line-height:normal;">1</div>
<div style="position:absolute;left:213px;top:762px;width:56px;height:28px;background:#d9e1f2;"></div>
<div style="position:absolute;left:212px;top:765.69px;width:57px;text-align:center;font-size:18px;color:#111;font-weight:normal;white-space:nowrap;line-height:normal;">2</div>
<div style="position:absolute;left:270px;top:762px;width:57px;height:28px;background:#d9e1f2;"></div>
<div style="position:absolute;left:269px;top:765.69px;width:58px;text-align:center;font-size:18px;color:#111;font-weight:normal;white-space:nowrap;line-height:normal;">1</div>
<div style="position:absolute;left:328px;top:762px;width:57px;height:28px;background:#d9e1f2;"></div>
<div style="position:absolute;left:327px;top:765.69px;width:58px;text-align:center;font-size:18px;color:#111;font-weight:normal;white-space:nowrap;line-height:normal;">1</div>
<div style="position:absolute;left:386px;top:762px;width:57px;height:28px;background:#d9e1f2;"></div>
<div style="position:absolute;left:385px;top:765.69px;width:58px;text-align:center;font-size:18px;color:#111;font-weight:normal;white-space:nowrap;line-height:normal;">1</div>
<div style="position:absolute;left:444px;top:762px;width:57px;height:28px;background:#d9e1f2;"></div>
<div style="position:absolute;left:443px;top:765.69px;width:58px;text-align:center;font-size:18px;color:#111;font-weight:normal;white-space:nowrap;line-height:normal;">1</div>
<div style="position:absolute;left:502px;top:762px;width:57px;height:28px;background:#d9e1f2;"></div>
<div style="position:absolute;left:501px;top:765.69px;width:58px;text-align:center;font-size:18px;color:#111;font-weight:normal;white-space:nowrap;line-height:normal;">0</div>
<div style="position:absolute;left:560px;top:762px;width:56px;height:28px;background:#d9e1f2;"></div>
<div style="position:absolute;left:559px;top:765.69px;width:57px;text-align:center;font-size:18px;color:#111;font-weight:normal;white-space:nowrap;line-height:normal;">0</div>
<div style="position:absolute;left:617px;top:762px;width:57px;height:28px;background:#d9e1f2;"></div>
<div style="position:absolute;left:616px;top:765.69px;width:58px;text-align:center;font-size:18px;color:#111;font-weight:normal;white-space:nowrap;line-height:normal;">0</div>
<div style="position:absolute;left:39px;top:791px;width:57px;height:29px;background:#d9e1f2;"></div>
<div style="position:absolute;left:38px;top:795.29px;width:58px;text-align:center;font-size:18px;color:#111;font-weight:normal;white-space:nowrap;line-height:normal;">0</div>
<div style="position:absolute;left:97px;top:791px;width:57px;height:29px;background:#d9e1f2;"></div>
<div style="position:absolute;left:96px;top:795.29px;width:58px;text-align:center;font-size:18px;color:#111;font-weight:normal;white-space:nowrap;line-height:normal;">0</div>
<div style="position:absolute;left:155px;top:791px;width:57px;height:29px;background:#d9e1f2;"></div>
<div style="position:absolute;left:154px;top:795.29px;width:58px;text-align:center;font-size:18px;color:#111;font-weight:normal;white-space:nowrap;line-height:normal;">1</div>
<div style="position:absolute;left:213px;top:791px;width:56px;height:29px;background:#d9e1f2;"></div>
<div style="position:absolute;left:212px;top:795.29px;width:57px;text-align:center;font-size:18px;color:#111;font-weight:normal;white-space:nowrap;line-height:normal;">1</div>
<div style="position:absolute;left:270px;top:791px;width:57px;height:29px;background:#d9e1f2;"></div>
<div style="position:absolute;left:269px;top:795.29px;width:58px;text-align:center;font-size:18px;color:#111;font-weight:normal;white-space:nowrap;line-height:normal;">1</div>
<div style="position:absolute;left:328px;top:791px;width:57px;height:29px;background:#d9e1f2;"></div>
<div style="position:absolute;left:327px;top:795.29px;width:58px;text-align:center;font-size:18px;color:#111;font-weight:normal;white-space:nowrap;line-height:normal;">0</div>
<div style="position:absolute;left:386px;top:791px;width:57px;height:29px;background:#d9e1f2;"></div>
<div style="position:absolute;left:385px;top:795.29px;width:58px;text-align:center;font-size:18px;color:#111;font-weight:normal;white-space:nowrap;line-height:normal;">0</div>
<div style="position:absolute;left:444px;top:791px;width:57px;height:29px;background:#d9e1f2;"></div>
<div style="position:absolute;left:443px;top:795.29px;width:58px;text-align:center;font-size:18px;color:#111;font-weight:normal;white-space:nowrap;line-height:normal;">0</div>
<div style="position:absolute;left:502px;top:791px;width:57px;height:29px;background:#d9e1f2;"></div>
<div style="position:absolute;left:501px;top:795.29px;width:58px;text-align:center;font-size:18px;color:#111;font-weight:normal;white-space:nowrap;line-height:normal;">0</div>
<div style="position:absolute;left:560px;top:791px;width:56px;height:29px;background:#d9e1f2;"></div>
<div style="position:absolute;left:559px;top:795.29px;width:57px;text-align:center;font-size:18px;color:#111;font-weight:normal;white-space:nowrap;line-height:normal;">0</div>
<div style="position:absolute;left:617px;top:791px;width:57px;height:29px;background:#d9e1f2;"></div>
<div style="position:absolute;left:616px;top:795.29px;width:58px;text-align:center;font-size:18px;color:#111;font-weight:normal;white-space:nowrap;line-height:normal;">0</div>
<div style="position:absolute;left:39px;top:821px;width:57px;height:29px;background:#d9e1f2;"></div>
<div style="position:absolute;left:38px;top:824.89px;width:58px;text-align:center;font-size:18px;color:#111;font-weight:normal;white-space:nowrap;line-height:normal;">0</div>
<div style="position:absolute;left:97px;top:821px;width:57px;height:29px;background:#d9e1f2;"></div>
<div style="position:absolute;left:96px;top:824.89px;width:58px;text-align:center;font-size:18px;color:#111;font-weight:normal;white-space:nowrap;line-height:normal;">0</div>
<div style="position:absolute;left:155px;top:821px;width:57px;height:29px;background:#d9e1f2;"></div>
<div style="position:absolute;left:154px;top:824.89px;width:58px;text-align:center;font-size:18px;color:#111;font-weight:normal;white-space:nowrap;line-height:normal;">0</div>
<div style="position:absolute;left:213px;top:821px;width:56px;height:29px;background:#d9e1f2;"></div>
<div style="position:absolute;left:212px;top:824.89px;width:57px;text-align:center;font-size:18px;color:#111;font-weight:normal;white-space:nowrap;line-height:normal;">0</div>
<div style="position:absolute;left:270px;top:821px;width:57px;height:29px;background:#d9e1f2;"></div>
<div style="position:absolute;left:269px;top:824.89px;width:58px;text-align:center;font-size:18px;color:#111;font-weight:normal;white-space:nowrap;line-height:normal;">0</div>
<div style="position:absolute;left:328px;top:821px;width:57px;height:29px;background:#d9e1f2;"></div>
<div style="position:absolute;left:327px;top:824.89px;width:58px;text-align:center;font-size:18px;color:#111;font-weight:normal;white-space:nowrap;line-height:normal;">0</div>
<div style="position:absolute;left:386px;top:821px;width:57px;height:29px;background:#d9e1f2;"></div>
<div style="position:absolute;left:385px;top:824.89px;width:58px;text-align:center;font-size:18px;color:#111;font-weight:normal;white-space:nowrap;line-height:normal;">0</div>
<div style="position:absolute;left:444px;top:821px;width:57px;height:29px;background:#d9e1f2;"></div>
<div style="position:absolute;left:443px;top:824.89px;width:58px;text-align:center;font-size:18px;color:#111;font-weight:normal;white-space:nowrap;line-height:normal;">0</div>
<div style="position:absolute;left:502px;top:821px;width:57px;height:29px;background:#d9e1f2;"></div>
<div style="position:absolute;left:501px;top:824.89px;width:58px;text-align:center;font-size:18px;color:#111;font-weight:normal;white-space:nowrap;line-height:normal;">0</div>
<div style="position:absolute;left:560px;top:821px;width:56px;height:29px;background:#d9e1f2;"></div>
<div style="position:absolute;left:559px;top:824.89px;width:57px;text-align:center;font-size:18px;color:#111;font-weight:normal;white-space:nowrap;line-height:normal;">0</div>
<div style="position:absolute;left:617px;top:821px;width:57px;height:29px;background:#d9e1f2;"></div>
<div style="position:absolute;left:616px;top:824.89px;width:58px;text-align:center;font-size:18px;color:#111;font-weight:normal;white-space:nowrap;line-height:normal;">0</div>
<div style="position:absolute;left:39px;top:851px;width:57px;height:28px;background:#d9e1f2;"></div>
<div style="position:absolute;left:38px;top:854.49px;width:58px;text-align:center;font-size:18px;color:#111;font-weight:normal;white-space:nowrap;line-height:normal;">0</div>
<div style="position:absolute;left:97px;top:851px;width:57px;height:28px;background:#d9e1f2;"></div>
<div style="position:absolute;left:96px;top:854.49px;width:58px;text-align:center;font-size:18px;color:#111;font-weight:normal;white-space:nowrap;line-height:normal;">2</div>
<div style="position:absolute;left:155px;top:851px;width:57px;height:28px;background:#d9e1f2;"></div>
<div style="position:absolute;left:154px;top:854.49px;width:58px;text-align:center;font-size:18px;color:#111;font-weight:normal;white-space:nowrap;line-height:normal;">3</div>
<div style="position:absolute;left:213px;top:851px;width:56px;height:28px;background:#d9e1f2;"></div>
<div style="position:absolute;left:212px;top:854.49px;width:57px;text-align:center;font-size:18px;color:#111;font-weight:normal;white-space:nowrap;line-height:normal;">4</div>
<div style="position:absolute;left:270px;top:851px;width:57px;height:28px;background:#d9e1f2;"></div>
<div style="position:absolute;left:269px;top:854.49px;width:58px;text-align:center;font-size:18px;color:#111;font-weight:normal;white-space:nowrap;line-height:normal;">3</div>
<div style="position:absolute;left:328px;top:851px;width:57px;height:28px;background:#d9e1f2;"></div>
<div style="position:absolute;left:327px;top:854.49px;width:58px;text-align:center;font-size:18px;color:#111;font-weight:normal;white-space:nowrap;line-height:normal;">2</div>
<div style="position:absolute;left:386px;top:851px;width:57px;height:28px;background:#d9e1f2;"></div>
<div style="position:absolute;left:385px;top:854.49px;width:58px;text-align:center;font-size:18px;color:#111;font-weight:normal;white-space:nowrap;line-height:normal;">3</div>
<div style="position:absolute;left:444px;top:851px;width:57px;height:28px;background:#d9e1f2;"></div>
<div style="position:absolute;left:443px;top:854.49px;width:58px;text-align:center;font-size:18px;color:#111;font-weight:normal;white-space:nowrap;line-height:normal;">2</div>
<div style="position:absolute;left:502px;top:851px;width:57px;height:28px;background:#d9e1f2;"></div>
<div style="position:absolute;left:501px;top:854.49px;width:58px;text-align:center;font-size:18px;color:#111;font-weight:normal;white-space:nowrap;line-height:normal;">0</div>
<div style="position:absolute;left:560px;top:851px;width:56px;height:28px;background:#d9e1f2;"></div>
<div style="position:absolute;left:559px;top:854.49px;width:57px;text-align:center;font-size:18px;color:#111;font-weight:normal;white-space:nowrap;line-height:normal;">0</div>
<div style="position:absolute;left:617px;top:851px;width:57px;height:28px;background:#d9e1f2;"></div>
<div style="position:absolute;left:616px;top:854.49px;width:58px;text-align:center;font-size:18px;color:#111;font-weight:normal;white-space:nowrap;line-height:normal;">0</div>
<div style="position:absolute;left:39px;top:909px;width:635px;height:28px;background:#bfeefb;"></div>
<div style="position:absolute;left:39px;top:939px;width:57px;height:29px;background:#bfeefb;"></div>
<div style="position:absolute;left:38px;top:943.29px;width:58px;text-align:center;font-size:18px;color:#111;font-weight:normal;white-space:nowrap;line-height:normal;">0</div>
<div style="position:absolute;left:97px;top:939px;width:57px;height:29px;background:#bfeefb;"></div>
<div style="position:absolute;left:96px;top:943.29px;width:58px;text-align:center;font-size:18px;color:#111;font-weight:normal;white-space:nowrap;line-height:normal;">0</div>
<div style="position:absolute;left:155px;top:939px;width:57px;height:29px;background:#bfeefb;"></div>
<div style="position:absolute;left:154px;top:943.29px;width:58px;text-align:center;font-size:18px;color:#111;font-weight:normal;white-space:nowrap;line-height:normal;">0</div>
<div style="position:absolute;left:213px;top:939px;width:56px;height:29px;background:#bfeefb;"></div>
<div style="position:absolute;left:212px;top:943.29px;width:57px;text-align:center;font-size:18px;color:#111;font-weight:normal;white-space:nowrap;line-height:normal;">0</div>
<div style="position:absolute;left:270px;top:939px;width:57px;height:29px;background:#bfeefb;"></div>
<div style="position:absolute;left:269px;top:943.29px;width:58px;text-align:center;font-size:18px;color:#111;font-weight:normal;white-space:nowrap;line-height:normal;">0</div>
<div style="position:absolute;left:328px;top:939px;width:57px;height:29px;background:#bfeefb;"></div>
<div style="position:absolute;left:327px;top:943.29px;width:58px;text-align:center;font-size:18px;color:#111;font-weight:normal;white-space:nowrap;line-height:normal;">0</div>
<div style="position:absolute;left:386px;top:939px;width:57px;height:29px;background:#bfeefb;"></div>
<div style="position:absolute;left:385px;top:943.29px;width:58px;text-align:center;font-size:18px;color:#111;font-weight:normal;white-space:nowrap;line-height:normal;">0</div>
<div style="position:absolute;left:444px;top:939px;width:57px;height:29px;background:#bfeefb;"></div>
<div style="position:absolute;left:443px;top:943.29px;width:58px;text-align:center;font-size:18px;color:#111;font-weight:normal;white-space:nowrap;line-height:normal;">0</div>
<div style="position:absolute;left:502px;top:939px;width:57px;height:29px;background:#bfeefb;"></div>
<div style="position:absolute;left:501px;top:943.29px;width:58px;text-align:center;font-size:18px;color:#111;font-weight:normal;white-space:nowrap;line-height:normal;">0</div>
<div style="position:absolute;left:560px;top:939px;width:56px;height:29px;background:#bfeefb;"></div>
<div style="position:absolute;left:559px;top:943.29px;width:57px;text-align:center;font-size:18px;color:#111;font-weight:normal;white-space:nowrap;line-height:normal;">0</div>
<div style="position:absolute;left:617px;top:939px;width:57px;height:29px;background:#bfeefb;"></div>
<div style="position:absolute;left:616px;top:943.29px;width:58px;text-align:center;font-size:18px;color:#111;font-weight:normal;white-space:nowrap;line-height:normal;">0</div>
<div style="position:absolute;left:39px;top:969px;width:57px;height:29px;background:#bfeefb;"></div>
<div style="position:absolute;left:38px;top:972.89px;width:58px;text-align:center;font-size:18px;color:#111;font-weight:normal;white-space:nowrap;line-height:normal;">1</div>
<div style="position:absolute;left:97px;top:969px;width:57px;height:29px;background:#bfeefb;"></div>
<div style="position:absolute;left:96px;top:972.89px;width:58px;text-align:center;font-size:18px;color:#111;font-weight:normal;white-space:nowrap;line-height:normal;">1</div>
<div style="position:absolute;left:155px;top:969px;width:57px;height:29px;background:#bfeefb;"></div>
<div style="position:absolute;left:154px;top:972.89px;width:58px;text-align:center;font-size:18px;color:#111;font-weight:normal;white-space:nowrap;line-height:normal;">1</div>
<div style="position:absolute;left:213px;top:969px;width:56px;height:29px;background:#bfeefb;"></div>
<div style="position:absolute;left:212px;top:972.89px;width:57px;text-align:center;font-size:18px;color:#111;font-weight:normal;white-space:nowrap;line-height:normal;">0</div>
<div style="position:absolute;left:270px;top:969px;width:57px;height:29px;background:#bfeefb;"></div>
<div style="position:absolute;left:269px;top:972.89px;width:58px;text-align:center;font-size:18px;color:#111;font-weight:normal;white-space:nowrap;line-height:normal;">0</div>
<div style="position:absolute;left:328px;top:969px;width:57px;height:29px;background:#bfeefb;"></div>
<div style="position:absolute;left:327px;top:972.89px;width:58px;text-align:center;font-size:18px;color:#111;font-weight:normal;white-space:nowrap;line-height:normal;">0</div>
<div style="position:absolute;left:386px;top:969px;width:57px;height:29px;background:#bfeefb;"></div>
<div style="position:absolute;left:385px;top:972.89px;width:58px;text-align:center;font-size:18px;color:#111;font-weight:normal;white-space:nowrap;line-height:normal;">0</div>
<div style="position:absolute;left:444px;top:969px;width:57px;height:29px;background:#bfeefb;"></div>
<div style="position:absolute;left:443px;top:972.89px;width:58px;text-align:center;font-size:18px;color:#111;font-weight:normal;white-space:nowrap;line-height:normal;">0</div>
<div style="position:absolute;left:502px;top:969px;width:57px;height:29px;background:#bfeefb;"></div>
<div style="position:absolute;left:501px;top:972.89px;width:58px;text-align:center;font-size:18px;color:#111;font-weight:normal;white-space:nowrap;line-height:normal;">0</div>
<div style="position:absolute;left:560px;top:969px;width:56px;height:29px;background:#bfeefb;"></div>
<div style="position:absolute;left:559px;top:972.89px;width:57px;text-align:center;font-size:18px;color:#111;font-weight:normal;white-space:nowrap;line-height:normal;">0</div>
<div style="position:absolute;left:617px;top:969px;width:57px;height:29px;background:#bfeefb;"></div>
<div style="position:absolute;left:616px;top:972.89px;width:58px;text-align:center;font-size:18px;color:#111;font-weight:normal;white-space:nowrap;line-height:normal;">0</div>
<div style="position:absolute;left:39px;top:999px;width:57px;height:28px;background:#bfeefb;"></div>
<div style="position:absolute;left:38px;top:1002.49px;width:58px;text-align:center;font-size:18px;color:#111;font-weight:normal;white-space:nowrap;line-height:normal;">0</div>
<div style="position:absolute;left:97px;top:999px;width:57px;height:28px;background:#bfeefb;"></div>
<div style="position:absolute;left:96px;top:1002.49px;width:58px;text-align:center;font-size:18px;color:#111;font-weight:normal;white-space:nowrap;line-height:normal;">0</div>
<div style="position:absolute;left:155px;top:999px;width:57px;height:28px;background:#bfeefb;"></div>
<div style="position:absolute;left:154px;top:1002.49px;width:58px;text-align:center;font-size:18px;color:#111;font-weight:normal;white-space:nowrap;line-height:normal;">1</div>
<div style="position:absolute;left:213px;top:999px;width:56px;height:28px;background:#bfeefb;"></div>
<div style="position:absolute;left:212px;top:1002.49px;width:57px;text-align:center;font-size:18px;color:#111;font-weight:normal;white-space:nowrap;line-height:normal;">1</div>
<div style="position:absolute;left:270px;top:999px;width:57px;height:28px;background:#bfeefb;"></div>
<div style="position:absolute;left:269px;top:1002.49px;width:58px;text-align:center;font-size:18px;color:#111;font-weight:normal;white-space:nowrap;line-height:normal;">1</div>
<div style="position:absolute;left:328px;top:999px;width:57px;height:28px;background:#bfeefb;"></div>
<div style="position:absolute;left:327px;top:1002.49px;width:58px;text-align:center;font-size:18px;color:#111;font-weight:normal;white-space:nowrap;line-height:normal;">1</div>
<div style="position:absolute;left:386px;top:999px;width:57px;height:28px;background:#bfeefb;"></div>
<div style="position:absolute;left:385px;top:1002.49px;width:58px;text-align:center;font-size:18px;color:#111;font-weight:normal;white-space:nowrap;line-height:normal;">0</div>
<div style="position:absolute;left:444px;top:999px;width:57px;height:28px;background:#bfeefb;"></div>
<div style="position:absolute;left:443px;top:1002.49px;width:58px;text-align:center;font-size:18px;color:#111;font-weight:normal;white-space:nowrap;line-height:normal;">0</div>
<div style="position:absolute;left:502px;top:999px;width:57px;height:28px;background:#bfeefb;"></div>
<div style="position:absolute;left:501px;top:1002.49px;width:58px;text-align:center;font-size:18px;color:#111;font-weight:normal;white-space:nowrap;line-height:normal;">0</div>
<div style="position:absolute;left:560px;top:999px;width:56px;height:28px;background:#bfeefb;"></div>
<div style="position:absolute;left:559px;top:1002.49px;width:57px;text-align:center;font-size:18px;color:#111;font-weight:normal;white-space:nowrap;line-height:normal;">0</div>
<div style="position:absolute;left:617px;top:999px;width:57px;height:28px;background:#bfeefb;"></div>
<div style="position:absolute;left:616px;top:1002.49px;width:58px;text-align:center;font-size:18px;color:#111;font-weight:normal;white-space:nowrap;line-height:normal;">0</div>
<div style="position:absolute;left:39px;top:1028px;width:57px;height:29px;background:#bfeefb;"></div>
<div style="position:absolute;left:38px;top:1032.09px;width:58px;text-align:center;font-size:18px;color:#111;font-weight:normal;white-space:nowrap;line-height:normal;">0</div>
<div style="position:absolute;left:97px;top:1028px;width:57px;height:29px;background:#bfeefb;"></div>
<div style="position:absolute;left:96px;top:1032.09px;width:58px;text-align:center;font-size:18px;color:#111;font-weight:normal;white-space:nowrap;line-height:normal;">0</div>
<div style="position:absolute;left:155px;top:1028px;width:57px;height:29px;background:#bfeefb;"></div>
<div style="position:absolute;left:154px;top:1032.09px;width:58px;text-align:center;font-size:18px;color:#111;font-weight:normal;white-space:nowrap;line-height:normal;">0</div>
<div style="position:absolute;left:213px;top:1028px;width:56px;height:29px;background:#bfeefb;"></div>
<div style="position:absolute;left:212px;top:1032.09px;width:57px;text-align:center;font-size:18px;color:#111;font-weight:normal;white-space:nowrap;line-height:normal;">0</div>
<div style="position:absolute;left:270px;top:1028px;width:57px;height:29px;background:#bfeefb;"></div>
<div style="position:absolute;left:269px;top:1032.09px;width:58px;text-align:center;font-size:18px;color:#111;font-weight:normal;white-space:nowrap;line-height:normal;">0</div>
<div style="position:absolute;left:328px;top:1028px;width:57px;height:29px;background:#bfeefb;"></div>
<div style="position:absolute;left:327px;top:1032.09px;width:58px;text-align:center;font-size:18px;color:#111;font-weight:normal;white-space:nowrap;line-height:normal;">0</div>
<div style="position:absolute;left:386px;top:1028px;width:57px;height:29px;background:#bfeefb;"></div>
<div style="position:absolute;left:385px;top:1032.09px;width:58px;text-align:center;font-size:18px;color:#111;font-weight:normal;white-space:nowrap;line-height:normal;">0</div>
<div style="position:absolute;left:444px;top:1028px;width:57px;height:29px;background:#bfeefb;"></div>
<div style="position:absolute;left:443px;top:1032.09px;width:58px;text-align:center;font-size:18px;color:#111;font-weight:normal;white-space:nowrap;line-height:normal;">0</div>
<div style="position:absolute;left:502px;top:1028px;width:57px;height:29px;background:#bfeefb;"></div>
<div style="position:absolute;left:501px;top:1032.09px;width:58px;text-align:center;font-size:18px;color:#111;font-weight:normal;white-space:nowrap;line-height:normal;">0</div>
<div style="position:absolute;left:560px;top:1028px;width:56px;height:29px;background:#bfeefb;"></div>
<div style="position:absolute;left:559px;top:1032.09px;width:57px;text-align:center;font-size:18px;color:#111;font-weight:normal;white-space:nowrap;line-height:normal;">0</div>
<div style="position:absolute;left:617px;top:1028px;width:57px;height:29px;background:#bfeefb;"></div>
<div style="position:absolute;left:616px;top:1032.09px;width:58px;text-align:center;font-size:18px;color:#111;font-weight:normal;white-space:nowrap;line-height:normal;">0</div>
<div style="position:absolute;left:39px;top:1058px;width:57px;height:28px;background:#bfeefb;"></div>
<div style="position:absolute;left:38px;top:1061.69px;width:58px;text-align:center;font-size:18px;color:#111;font-weight:normal;white-space:nowrap;line-height:normal;">1</div>
<div style="position:absolute;left:97px;top:1058px;width:57px;height:28px;background:#bfeefb;"></div>
<div style="position:absolute;left:96px;top:1061.69px;width:58px;text-align:center;font-size:18px;color:#111;font-weight:normal;white-space:nowrap;line-height:normal;">1</div>
<div style="position:absolute;left:155px;top:1058px;width:57px;height:28px;background:#bfeefb;"></div>
<div style="position:absolute;left:154px;top:1061.69px;width:58px;text-align:center;font-size:18px;color:#111;font-weight:normal;white-space:nowrap;line-height:normal;">2</div>
<div style="position:absolute;left:213px;top:1058px;width:56px;height:28px;background:#bfeefb;"></div>
<div style="position:absolute;left:212px;top:1061.69px;width:57px;text-align:center;font-size:18px;color:#111;font-weight:normal;white-space:nowrap;line-height:normal;">1</div>
<div style="position:absolute;left:270px;top:1058px;width:57px;height:28px;background:#bfeefb;"></div>
<div style="position:absolute;left:269px;top:1061.69px;width:58px;text-align:center;font-size:18px;color:#111;font-weight:normal;white-space:nowrap;line-height:normal;">1</div>
<div style="position:absolute;left:328px;top:1058px;width:57px;height:28px;background:#bfeefb;"></div>
<div style="position:absolute;left:327px;top:1061.69px;width:58px;text-align:center;font-size:18px;color:#111;font-weight:normal;white-space:nowrap;line-height:normal;">1</div>
<div style="position:absolute;left:386px;top:1058px;width:57px;height:28px;background:#bfeefb;"></div>
<div style="position:absolute;left:385px;top:1061.69px;width:58px;text-align:center;font-size:18px;color:#111;font-weight:normal;white-space:nowrap;line-height:normal;">0</div>
<div style="position:absolute;left:444px;top:1058px;width:57px;height:28px;background:#bfeefb;"></div>
<div style="position:absolute;left:443px;top:1061.69px;width:58px;text-align:center;font-size:18px;color:#111;font-weight:normal;white-space:nowrap;line-height:normal;">0</div>
<div style="position:absolute;left:502px;top:1058px;width:57px;height:28px;background:#bfeefb;"></div>
<div style="position:absolute;left:501px;top:1061.69px;width:58px;text-align:center;font-size:18px;color:#111;font-weight:normal;white-space:nowrap;line-height:normal;">0</div>
<div style="position:absolute;left:560px;top:1058px;width:56px;height:28px;background:#bfeefb;"></div>
<div style="position:absolute;left:559px;top:1061.69px;width:57px;text-align:center;font-size:18px;color:#111;font-weight:normal;white-space:nowrap;line-height:normal;">0</div>
<div style="position:absolute;left:617px;top:1058px;width:57px;height:28px;background:#bfeefb;"></div>
<div style="position:absolute;left:616px;top:1061.69px;width:58px;text-align:center;font-size:18px;color:#111;font-weight:normal;white-space:nowrap;line-height:normal;">0</div>
<div style="position:absolute;left:39px;top:1117px;width:57px;height:29px;background:#cde9f4;"></div>
<div style="position:absolute;left:38px;top:1120.89px;width:58px;text-align:center;font-size:18px;color:#111;font-weight:normal;white-space:nowrap;line-height:normal;">15</div>
<div style="position:absolute;left:97px;top:1117px;width:57px;height:29px;background:#cde9f4;"></div>
<div style="position:absolute;left:96px;top:1120.89px;width:58px;text-align:center;font-size:18px;color:#111;font-weight:normal;white-space:nowrap;line-height:normal;">12</div>
<div style="position:absolute;left:155px;top:1117px;width:57px;height:29px;background:#cde9f4;"></div>
<div style="position:absolute;left:154px;top:1120.89px;width:58px;text-align:center;font-size:18px;color:#111;font-weight:normal;white-space:nowrap;line-height:normal;">22</div>
<div style="position:absolute;left:213px;top:1117px;width:56px;height:29px;background:#cde9f4;"></div>
<div style="position:absolute;left:212px;top:1120.89px;width:57px;text-align:center;font-size:18px;color:#111;font-weight:normal;white-space:nowrap;line-height:normal;">20</div>
<div style="position:absolute;left:270px;top:1117px;width:57px;height:29px;background:#cde9f4;"></div>
<div style="position:absolute;left:269px;top:1120.89px;width:58px;text-align:center;font-size:18px;color:#111;font-weight:normal;white-space:nowrap;line-height:normal;">20</div>
<div style="position:absolute;left:328px;top:1117px;width:57px;height:29px;background:#cde9f4;"></div>
<div style="position:absolute;left:327px;top:1120.89px;width:58px;text-align:center;font-size:18px;color:#111;font-weight:normal;white-space:nowrap;line-height:normal;">15</div>
<div style="position:absolute;left:386px;top:1117px;width:57px;height:29px;background:#cde9f4;"></div>
<div style="position:absolute;left:385px;top:1120.89px;width:58px;text-align:center;font-size:18px;color:#111;font-weight:normal;white-space:nowrap;line-height:normal;">10</div>
<div style="position:absolute;left:444px;top:1117px;width:57px;height:29px;background:#cde9f4;"></div>
<div style="position:absolute;left:443px;top:1120.89px;width:58px;text-align:center;font-size:18px;color:#111;font-weight:normal;white-space:nowrap;line-height:normal;">5</div>
<div style="position:absolute;left:502px;top:1117px;width:57px;height:29px;background:#cde9f4;"></div>
<div style="position:absolute;left:501px;top:1120.89px;width:58px;text-align:center;font-size:18px;color:#111;font-weight:normal;white-space:nowrap;line-height:normal;">0</div>
<div style="position:absolute;left:560px;top:1117px;width:56px;height:29px;background:#cde9f4;"></div>
<div style="position:absolute;left:559px;top:1120.89px;width:57px;text-align:center;font-size:18px;color:#111;font-weight:normal;white-space:nowrap;line-height:normal;">0</div>
<div style="position:absolute;left:617px;top:1117px;width:57px;height:29px;background:#cde9f4;"></div>
<div style="position:absolute;left:616px;top:1120.89px;width:58px;text-align:center;font-size:18px;color:#111;font-weight:normal;white-space:nowrap;line-height:normal;">0</div>
<div style="position:absolute;left:692px;top:494px;width:175px;height:29px;background:#ffe699;"></div>
<div style="position:absolute;left:692px;top:499.29px;width:175px;text-align:center;font-size:18px;color:#111;font-weight:bold;white-space:nowrap;line-height:normal;letter-spacing:0.688px;">Morning/Day Shift</div>
<div style="position:absolute;left:900px;top:495px;width:57px;height:28px;background:#ffe699;"></div>
<div style="position:absolute;left:900px;top:500.29px;width:58px;text-align:center;font-size:18px;color:#111;font-weight:bold;white-space:nowrap;line-height:normal;letter-spacing:1.466px;">Code</div>
<div style="position:absolute;left:959px;top:495px;width:176px;height:28px;background:#ffe699;"></div>
<div style="position:absolute;left:958px;top:499.29px;width:178px;text-align:center;font-size:18px;color:#111;font-weight:bold;white-space:nowrap;line-height:normal;letter-spacing:0.469px;">Time of Shift</div>
<div style="position:absolute;left:1137px;top:495px;width:59px;height:28px;background:#ffe699;"></div>
<div style="position:absolute;left:1136px;top:500.29px;width:60px;text-align:center;font-size:18px;color:#111;font-weight:bold;white-space:nowrap;line-height:normal;letter-spacing:1.242px;">Hrs</div>
<div style="position:absolute;left:692px;top:525px;width:175px;height:28px;background:#ffe699;"></div>
<div style="position:absolute;left:692px;top:528.89px;width:175px;text-align:center;font-size:18px;color:#222;font-weight:normal;white-space:nowrap;line-height:normal;letter-spacing:0.797px;">early shift</div>
<div style="position:absolute;left:900px;top:525px;width:57px;height:28px;background:#ffe699;"></div>
<div style="position:absolute;left:900px;top:529.89px;width:58px;text-align:center;font-size:18px;color:#222;font-weight:normal;white-space:nowrap;line-height:normal;letter-spacing:0.6px;">A</div>
<div style="position:absolute;left:959px;top:525px;width:176px;height:28px;background:#ffe699;"></div>
<div style="position:absolute;left:958px;top:528.89px;width:178px;text-align:center;font-size:18px;color:#222;font-weight:normal;white-space:nowrap;line-height:normal;letter-spacing:0.740px;">0600-1430</div>
<div style="position:absolute;left:1137px;top:525px;width:59px;height:28px;background:#ffe699;"></div>
<div style="position:absolute;left:1136px;top:529.89px;width:60px;text-align:center;font-size:18px;color:#222;font-weight:normal;white-space:nowrap;line-height:normal;letter-spacing:0.489px;">5.0</div>
<div style="position:absolute;left:692px;top:555px;width:175px;height:27px;background:#ffe699;"></div>
<div style="position:absolute;left:692px;top:558.49px;width:175px;text-align:center;font-size:18px;color:#222;font-weight:normal;white-space:nowrap;line-height:normal;letter-spacing:0.726px;">standard early</div>
<div style="position:absolute;left:900px;top:555px;width:57px;height:27px;background:#ffe699;"></div>
<div style="position:absolute;left:900px;top:559.49px;width:58px;text-align:center;font-size:18px;color:#222;font-weight:normal;white-space:nowrap;line-height:normal;letter-spacing:0.6px;">K</div>
<div style="position:absolute;left:959px;top:555px;width:176px;height:27px;background:#ffe699;"></div>
<div style="position:absolute;left:958px;top:558.49px;width:178px;text-align:center;font-size:18px;color:#222;font-weight:normal;white-space:nowrap;line-height:normal;letter-spacing:0.740px;">0700-1530</div>
<div style="position:absolute;left:1137px;top:555px;width:59px;height:27px;background:#ffe699;"></div>
<div style="position:absolute;left:1136px;top:559.49px;width:60px;text-align:center;font-size:18px;color:#222;font-weight:normal;white-space:nowrap;line-height:normal;letter-spacing:0.489px;">8.0</div>
<div style="position:absolute;left:692px;top:584px;width:175px;height:28px;background:#ffe699;"></div>
<div style="position:absolute;left:900px;top:584px;width:57px;height:28px;background:#ffe699;"></div>
<div style="position:absolute;left:959px;top:584px;width:176px;height:28px;background:#ffe699;"></div>
<div style="position:absolute;left:1137px;top:584px;width:59px;height:28px;background:#ffe699;"></div>
<div style="position:absolute;left:692px;top:614px;width:175px;height:27px;background:#ffe699;"></div>
<div style="position:absolute;left:900px;top:614px;width:57px;height:27px;background:#ffe699;"></div>
<div style="position:absolute;left:959px;top:614px;width:176px;height:27px;background:#ffe699;"></div>
<div style="position:absolute;left:1137px;top:614px;width:59px;height:27px;background:#ffe699;"></div>
<div style="position:absolute;left:692px;top:643px;width:175px;height:28px;background:#ffe699;"></div>
<div style="position:absolute;left:900px;top:643px;width:57px;height:28px;background:#ffe699;"></div>
<div style="position:absolute;left:959px;top:643px;width:176px;height:28px;background:#ffe699;"></div>
<div style="position:absolute;left:1137px;top:643px;width:59px;height:28px;background:#ffe699;"></div>
<div style="position:absolute;left:692px;top:702px;width:175px;height:28px;background:#d9e1f2;"></div>
<div style="position:absolute;left:692px;top:706.49px;width:175px;text-align:center;font-size:18px;color:#111;font-weight:bold;white-space:nowrap;line-height:normal;letter-spacing:0.644px;">Afternoon Shift</div>
<div style="position:absolute;left:900px;top:703px;width:57px;height:27px;background:#d9e1f2;"></div>
<div style="position:absolute;left:900px;top:707.49px;width:58px;text-align:center;font-size:18px;color:#111;font-weight:bold;white-space:nowrap;line-height:normal;letter-spacing:1.466px;">Code</div>
<div style="position:absolute;left:959px;top:703px;width:176px;height:27px;background:#d9e1f2;"></div>
<div style="position:absolute;left:958px;top:706.49px;width:178px;text-align:center;font-size:18px;color:#111;font-weight:bold;white-space:nowrap;line-height:normal;letter-spacing:0.469px;">Time of Shift</div>
<div style="position:absolute;left:1137px;top:703px;width:59px;height:27px;background:#d9e1f2;"></div>
<div style="position:absolute;left:1136px;top:707.49px;width:60px;text-align:center;font-size:18px;color:#111;font-weight:bold;white-space:nowrap;line-height:normal;letter-spacing:1.242px;">Hrs</div>
<div style="position:absolute;left:692px;top:732px;width:175px;height:28px;background:#d9e1f2;"></div>
<div style="position:absolute;left:692px;top:736.09px;width:175px;text-align:center;font-size:18px;color:#222;font-weight:normal;white-space:nowrap;line-height:normal;letter-spacing:0.963px;">late shift</div>
<div style="position:absolute;left:900px;top:732px;width:57px;height:28px;background:#d9e1f2;"></div>
<div style="position:absolute;left:900px;top:737.09px;width:58px;text-align:center;font-size:18px;color:#222;font-weight:normal;white-space:nowrap;line-height:normal;letter-spacing:0.6px;">P</div>
<div style="position:absolute;left:959px;top:732px;width:176px;height:28px;background:#d9e1f2;"></div>
<div style="position:absolute;left:958px;top:736.09px;width:178px;text-align:center;font-size:18px;color:#222;font-weight:normal;white-space:nowrap;line-height:normal;letter-spacing:0.740px;">1330-2200</div>
<div style="position:absolute;left:1137px;top:732px;width:59px;height:28px;background:#d9e1f2;"></div>
<div style="position:absolute;left:1136px;top:737.09px;width:60px;text-align:center;font-size:18px;color:#222;font-weight:normal;white-space:nowrap;line-height:normal;letter-spacing:0.489px;">8.0</div>
<div style="position:absolute;left:692px;top:762px;width:175px;height:27px;background:#d9e1f2;"></div>
<div style="position:absolute;left:692px;top:765.69px;width:175px;text-align:center;font-size:18px;color:#222;font-weight:normal;white-space:nowrap;line-height:normal;letter-spacing:-0.507px;">LATE SHORT</div>
<div style="position:absolute;left:900px;top:762px;width:57px;height:27px;background:#d9e1f2;"></div>
<div style="position:absolute;left:900px;top:766.69px;width:58px;text-align:center;font-size:18px;color:#222;font-weight:normal;white-space:nowrap;line-height:normal;letter-spacing:0.6px;">L</div>
<div style="position:absolute;left:959px;top:762px;width:176px;height:27px;background:#d9e1f2;"></div>
<div style="position:absolute;left:958px;top:765.69px;width:178px;text-align:center;font-size:18px;color:#222;font-weight:normal;white-space:nowrap;line-height:normal;letter-spacing:0.740px;">1530-2200</div>
<div style="position:absolute;left:1137px;top:762px;width:59px;height:27px;background:#d9e1f2;"></div>
<div style="position:absolute;left:1136px;top:766.69px;width:60px;text-align:center;font-size:18px;color:#222;font-weight:normal;white-space:nowrap;line-height:normal;letter-spacing:0.489px;">5.0</div>
<div style="position:absolute;left:692px;top:791px;width:175px;height:28px;background:#d9e1f2;"></div>
<div style="position:absolute;left:900px;top:791px;width:57px;height:28px;background:#d9e1f2;"></div>
<div style="position:absolute;left:959px;top:791px;width:176px;height:28px;background:#d9e1f2;"></div>
<div style="position:absolute;left:1137px;top:791px;width:59px;height:28px;background:#d9e1f2;"></div>
<div style="position:absolute;left:692px;top:821px;width:175px;height:28px;background:#d9e1f2;"></div>
<div style="position:absolute;left:900px;top:821px;width:57px;height:28px;background:#d9e1f2;"></div>
<div style="position:absolute;left:959px;top:821px;width:176px;height:28px;background:#d9e1f2;"></div>
<div style="position:absolute;left:1137px;top:821px;width:59px;height:28px;background:#d9e1f2;"></div>
<div style="position:absolute;left:692px;top:851px;width:175px;height:27px;background:#d9e1f2;"></div>
<div style="position:absolute;left:900px;top:851px;width:57px;height:27px;background:#d9e1f2;"></div>
<div style="position:absolute;left:959px;top:851px;width:176px;height:27px;background:#d9e1f2;"></div>
<div style="position:absolute;left:1137px;top:851px;width:59px;height:27px;background:#d9e1f2;"></div>
<div style="position:absolute;left:692px;top:909px;width:175px;height:28px;background:#bfeefb;"></div>
<div style="position:absolute;left:692px;top:913.69px;width:175px;text-align:center;font-size:18px;color:#111;font-weight:bold;white-space:nowrap;line-height:normal;letter-spacing:0.532px;">Night Shift</div>
<div style="position:absolute;left:900px;top:910px;width:57px;height:27px;background:#bfeefb;"></div>
<div style="position:absolute;left:900px;top:914.69px;width:58px;text-align:center;font-size:18px;color:#111;font-weight:bold;white-space:nowrap;line-height:normal;letter-spacing:1.466px;">Code</div>
<div style="position:absolute;left:959px;top:910px;width:176px;height:27px;background:#bfeefb;"></div>
<div style="position:absolute;left:958px;top:913.69px;width:178px;text-align:center;font-size:18px;color:#111;font-weight:bold;white-space:nowrap;line-height:normal;letter-spacing:0.469px;">Time of Shift</div>
<div style="position:absolute;left:1137px;top:910px;width:59px;height:27px;background:#bfeefb;"></div>
<div style="position:absolute;left:1136px;top:914.69px;width:60px;text-align:center;font-size:18px;color:#111;font-weight:bold;white-space:nowrap;line-height:normal;letter-spacing:1.242px;">Hrs</div>
<div style="position:absolute;left:692px;top:939px;width:175px;height:28px;background:#bfeefb;"></div>
<div style="position:absolute;left:692px;top:943.29px;width:175px;text-align:center;font-size:18px;color:#222;font-weight:normal;white-space:nowrap;line-height:normal;letter-spacing:0.426px;">long night</div>
<div style="position:absolute;left:900px;top:939px;width:57px;height:28px;background:#bfeefb;"></div>
<div style="position:absolute;left:900px;top:944.29px;width:58px;text-align:center;font-size:18px;color:#222;font-weight:normal;white-space:nowrap;line-height:normal;letter-spacing:0.6px;">S</div>
<div style="position:absolute;left:959px;top:939px;width:176px;height:28px;background:#bfeefb;"></div>
<div style="position:absolute;left:958px;top:943.29px;width:178px;text-align:center;font-size:18px;color:#222;font-weight:normal;white-space:nowrap;line-height:normal;letter-spacing:0.740px;">2130-0730</div>
<div style="position:absolute;left:1137px;top:939px;width:59px;height:28px;background:#bfeefb;"></div>
<div style="position:absolute;left:1136px;top:944.29px;width:60px;text-align:center;font-size:18px;color:#222;font-weight:normal;white-space:nowrap;line-height:normal;letter-spacing:0.489px;">7.0</div>
<div style="position:absolute;left:692px;top:969px;width:175px;height:28px;background:#bfeefb;"></div>
<div style="position:absolute;left:900px;top:969px;width:57px;height:28px;background:#bfeefb;"></div>
<div style="position:absolute;left:900px;top:973.89px;width:58px;text-align:center;font-size:18px;color:#222;font-weight:normal;white-space:nowrap;line-height:normal;letter-spacing:0.6px;">H</div>
<div style="position:absolute;left:959px;top:969px;width:176px;height:28px;background:#bfeefb;"></div>
<div style="position:absolute;left:1137px;top:969px;width:59px;height:28px;background:#bfeefb;"></div>
<div style="position:absolute;left:1136px;top:973.89px;width:60px;text-align:center;font-size:18px;color:#222;font-weight:normal;white-space:nowrap;line-height:normal;letter-spacing:0.489px;">5.0</div>
<div style="position:absolute;left:692px;top:999px;width:175px;height:27px;background:#bfeefb;"></div>
<div style="position:absolute;left:900px;top:999px;width:57px;height:27px;background:#bfeefb;"></div>
<div style="position:absolute;left:959px;top:999px;width:176px;height:27px;background:#bfeefb;"></div>
<div style="position:absolute;left:1137px;top:999px;width:59px;height:27px;background:#bfeefb;"></div>
<div style="position:absolute;left:692px;top:1028px;width:175px;height:28px;background:#bfeefb;"></div>
<div style="position:absolute;left:900px;top:1028px;width:57px;height:28px;background:#bfeefb;"></div>
<div style="position:absolute;left:959px;top:1028px;width:176px;height:28px;background:#bfeefb;"></div>
<div style="position:absolute;left:1137px;top:1028px;width:59px;height:28px;background:#bfeefb;"></div>
<div style="position:absolute;left:692px;top:1058px;width:175px;height:27px;background:#bfeefb;"></div>
<div style="position:absolute;left:900px;top:1058px;width:57px;height:27px;background:#bfeefb;"></div>
<div style="position:absolute;left:959px;top:1058px;width:176px;height:27px;background:#bfeefb;"></div>
<div style="position:absolute;left:1137px;top:1058px;width:59px;height:27px;background:#bfeefb;"></div>
<div style="position:absolute;left:692px;top:1116px;width:175px;height:29px;background:#ebebeb;"></div>
<div style="position:absolute;left:692px;top:1120.89px;width:175px;text-align:center;font-size:18px;color:#111;font-weight:bold;white-space:nowrap;line-height:normal;letter-spacing:0.815px;">Non-Productive</div>
<div style="position:absolute;left:900px;top:1117px;width:57px;height:28px;background:#ebebeb;"></div>
<div style="position:absolute;left:900px;top:1121.89px;width:58px;text-align:center;font-size:18px;color:#111;font-weight:bold;white-space:nowrap;line-height:normal;letter-spacing:1.466px;">Code</div>
<div style="position:absolute;left:959px;top:1117px;width:176px;height:28px;background:#ebebeb;"></div>
<div style="position:absolute;left:958px;top:1120.89px;width:178px;text-align:center;font-size:18px;color:#111;font-weight:bold;white-space:nowrap;line-height:normal;letter-spacing:0.469px;">Time of Shift</div>
<div style="position:absolute;left:1137px;top:1117px;width:59px;height:28px;background:#ebebeb;"></div>
<div style="position:absolute;left:1136px;top:1121.89px;width:60px;text-align:center;font-size:18px;color:#111;font-weight:bold;white-space:nowrap;line-height:normal;letter-spacing:1.242px;">Hrs</div>
<div style="position:absolute;left:692px;top:1147px;width:175px;height:27px;background:#ebebeb;"></div>
<div style="position:absolute;left:692px;top:1150.49px;width:175px;text-align:center;font-size:18px;color:#222;font-weight:normal;white-space:nowrap;line-height:normal;letter-spacing:0.575px;">Roster day off</div>
<div style="position:absolute;left:900px;top:1147px;width:57px;height:27px;background:#fee440;"></div>
<div style="position:absolute;left:900px;top:1151.49px;width:58px;text-align:center;font-size:18px;color:#222;font-weight:normal;white-space:nowrap;line-height:normal;letter-spacing:0.6px;">RD</div>
<div style="position:absolute;left:959px;top:1147px;width:176px;height:27px;background:#ebebeb;"></div>
<div style="position:absolute;left:958px;top:1150.49px;width:178px;text-align:center;font-size:18px;color:#222;font-weight:normal;white-space:nowrap;line-height:normal;letter-spacing:0.790px;">0800-1630</div>
<div style="position:absolute;left:1137px;top:1147px;width:59px;height:27px;background:#ebebeb;"></div>
<div style="position:absolute;left:1136px;top:1151.49px;width:60px;text-align:center;font-size:18px;color:#222;font-weight:normal;white-space:nowrap;line-height:normal;letter-spacing:0.489px;">8.0</div>
<div style="position:absolute;left:692px;top:1176px;width:175px;height:28px;background:#ebebeb;"></div>
<div style="position:absolute;left:692px;top:1180.09px;width:175px;text-align:center;font-size:18px;color:#222;font-weight:normal;white-space:nowrap;line-height:normal;letter-spacing:0.428px;">Annual Leave</div>
<div style="position:absolute;left:900px;top:1176px;width:57px;height:28px;background:#00bbf9;"></div>
<div style="position:absolute;left:900px;top:1181.09px;width:58px;text-align:center;font-size:18px;color:#fff;font-weight:normal;white-space:nowrap;line-height:normal;letter-spacing:0.6px;">AL</div>
<div style="position:absolute;left:959px;top:1176px;width:176px;height:28px;background:#ebebeb;"></div>
<div style="position:absolute;left:958px;top:1180.09px;width:178px;text-align:center;font-size:18px;color:#222;font-weight:normal;white-space:nowrap;line-height:normal;letter-spacing:0.790px;">0800-1630</div>
<div style="position:absolute;left:1137px;top:1176px;width:59px;height:28px;background:#ebebeb;"></div>
<div style="position:absolute;left:1136px;top:1181.09px;width:60px;text-align:center;font-size:18px;color:#222;font-weight:normal;white-space:nowrap;line-height:normal;letter-spacing:0.489px;">8.0</div>
<div style="position:absolute;left:692px;top:1206px;width:175px;height:27px;background:#ebebeb;"></div>
<div style="position:absolute;left:692px;top:1209.69px;width:175px;text-align:center;font-size:18px;color:#222;font-weight:normal;white-space:nowrap;line-height:normal;letter-spacing:0.688px;">Maternity Leave</div>
<div style="position:absolute;left:900px;top:1206px;width:57px;height:27px;background:#f15bb5;"></div>
<div style="position:absolute;left:900px;top:1210.69px;width:58px;text-align:center;font-size:18px;color:#fff;font-weight:normal;white-space:nowrap;line-height:normal;letter-spacing:0.6px;">ML</div>
<div style="position:absolute;left:959px;top:1206px;width:176px;height:27px;background:#ebebeb;"></div>
<div style="position:absolute;left:958px;top:1209.69px;width:178px;text-align:center;font-size:18px;color:#222;font-weight:normal;white-space:nowrap;line-height:normal;letter-spacing:0.790px;">0800-1630</div>
<div style="position:absolute;left:1137px;top:1206px;width:59px;height:27px;background:#ebebeb;"></div>
<div style="position:absolute;left:1136px;top:1210.69px;width:60px;text-align:center;font-size:18px;color:#222;font-weight:normal;white-space:nowrap;line-height:normal;letter-spacing:0.489px;">8.0</div>
<div style="position:absolute;left:692px;top:1235px;width:175px;height:28px;background:#ebebeb;"></div>
<div style="position:absolute;left:692px;top:1239.29px;width:175px;text-align:center;font-size:18px;color:#222;font-weight:normal;white-space:nowrap;line-height:normal;letter-spacing:0.578px;">Education Leave</div>
<div style="position:absolute;left:900px;top:1235px;width:57px;height:28px;background:#00f0d0;"></div>
<div style="position:absolute;left:900px;top:1240.29px;width:58px;text-align:center;font-size:18px;color:#fff;font-weight:normal;white-space:nowrap;line-height:normal;letter-spacing:0.6px;">EL</div>
<div style="position:absolute;left:959px;top:1235px;width:176px;height:28px;background:#ebebeb;"></div>
<div style="position:absolute;left:958px;top:1239.29px;width:178px;text-align:center;font-size:18px;color:#222;font-weight:normal;white-space:nowrap;line-height:normal;letter-spacing:0.790px;">0800-1630</div>
<div style="position:absolute;left:1137px;top:1235px;width:59px;height:28px;background:#ebebeb;"></div>
<div style="position:absolute;left:1136px;top:1240.29px;width:60px;text-align:center;font-size:18px;color:#222;font-weight:normal;white-space:nowrap;line-height:normal;letter-spacing:0.489px;">8.0</div>
<div style="position:absolute;left:692px;top:1265px;width:175px;height:27px;background:#ebebeb;"></div>
<div style="position:absolute;left:692px;top:1268.89px;width:175px;text-align:center;font-size:18px;color:#222;font-weight:normal;white-space:nowrap;line-height:normal;letter-spacing:0.246px;">Long Service Leave</div>
<div style="position:absolute;left:900px;top:1265px;width:57px;height:27px;background:#9b5de5;"></div>
<div style="position:absolute;left:900px;top:1269.89px;width:58px;text-align:center;font-size:18px;color:#fff;font-weight:normal;white-space:nowrap;line-height:normal;letter-spacing:0.6px;">LSL</div>
<div style="position:absolute;left:959px;top:1265px;width:176px;height:27px;background:#ebebeb;"></div>
<div style="position:absolute;left:958px;top:1268.89px;width:178px;text-align:center;font-size:18px;color:#222;font-weight:normal;white-space:nowrap;line-height:normal;letter-spacing:0.790px;">0800-1630</div>
<div style="position:absolute;left:1137px;top:1265px;width:59px;height:27px;background:#ebebeb;"></div>
<div style="position:absolute;left:1136px;top:1269.89px;width:60px;text-align:center;font-size:18px;color:#222;font-weight:normal;white-space:nowrap;line-height:normal;letter-spacing:0.489px;">8.0</div>
<div style="position:absolute;left:1214px;top:494px;width:325px;height:29px;background:#ffc000;"></div>
<div style="position:absolute;left:1541px;top:494px;width:369px;height:29px;background:#ffc000;"></div>
<div style="position:absolute;left:1218px;top:496.43px;font-size:26px;color:#111;font-weight:normal;white-space:nowrap;line-height:normal;letter-spacing:0.9px;">Holiday</div>
<div style="position:absolute;left:1545px;top:496.43px;font-size:26px;color:#111;font-weight:normal;white-space:nowrap;line-height:normal;letter-spacing:0.9px;">Date</div>
<div style="position:absolute;left:1214px;top:524px;width:325px;height:29px;background:#d9d9d9;"></div>
<div style="position:absolute;left:1541px;top:524px;width:369px;height:29px;background:#d9d9d9;"></div>
<div style="position:absolute;left:1218px;top:526.44px;font-size:22.5px;color:#1f2630;font-weight:bold;white-space:nowrap;line-height:normal;letter-spacing:0.3px;">New Year's Day</div>
<div style="position:absolute;left:1214px;top:554px;width:325px;height:28px;background:#ededed;"></div>
<div style="position:absolute;left:1541px;top:554px;width:369px;height:28px;background:#ededed;"></div>
<div style="position:absolute;left:1218px;top:556.04px;font-size:22.5px;color:#1f2630;font-weight:bold;white-space:nowrap;line-height:normal;letter-spacing:0.3px;">Good Friday</div>
<div style="position:absolute;left:1214px;top:583px;width:325px;height:29px;background:#d9d9d9;"></div>
<div style="position:absolute;left:1541px;top:583px;width:369px;height:29px;background:#d9d9d9;"></div>
<div style="position:absolute;left:1218px;top:585.64px;font-size:22.5px;color:#1f2630;font-weight:bold;white-space:nowrap;line-height:normal;letter-spacing:0.3px;">Easter Saturday</div>
<div style="position:absolute;left:1214px;top:613px;width:325px;height:28px;background:#ededed;"></div>
<div style="position:absolute;left:1541px;top:613px;width:369px;height:28px;background:#ededed;"></div>
<div style="position:absolute;left:1218px;top:615.24px;font-size:22.5px;color:#1f2630;font-weight:bold;white-space:nowrap;line-height:normal;letter-spacing:0.3px;">Easter Sunday</div>
<div style="position:absolute;left:1214px;top:642px;width:325px;height:29px;background:#d9d9d9;"></div>
<div style="position:absolute;left:1541px;top:642px;width:369px;height:29px;background:#d9d9d9;"></div>
<div style="position:absolute;left:1218px;top:644.84px;font-size:22.5px;color:#1f2630;font-weight:bold;white-space:nowrap;line-height:normal;letter-spacing:0.3px;">Easter Monday</div>
<div style="position:absolute;left:1214px;top:672px;width:325px;height:29px;background:#ededed;"></div>
<div style="position:absolute;left:1541px;top:672px;width:369px;height:29px;background:#ededed;"></div>
<div style="position:absolute;left:1218px;top:674.44px;font-size:22.5px;color:#1f2630;font-weight:bold;white-space:nowrap;line-height:normal;letter-spacing:0.3px;">Anzac Day</div>
<div style="position:absolute;left:1214px;top:702px;width:325px;height:28px;background:#d9d9d9;"></div>
<div style="position:absolute;left:1541px;top:702px;width:369px;height:28px;background:#d9d9d9;"></div>
<div style="position:absolute;left:1218px;top:704.04px;font-size:22.5px;color:#1f2630;font-weight:bold;white-space:nowrap;line-height:normal;letter-spacing:0.3px;">Queen's Birthday</div>
<div style="position:absolute;left:1214px;top:731px;width:325px;height:29px;background:#ededed;"></div>
<div style="position:absolute;left:1541px;top:731px;width:369px;height:29px;background:#ededed;"></div>
<div style="position:absolute;left:1218px;top:733.64px;font-size:22.5px;color:#1f2630;font-weight:bold;white-space:nowrap;line-height:normal;letter-spacing:0.3px;">Labour Day</div>
<div style="position:absolute;left:1214px;top:761px;width:325px;height:28px;background:#d9d9d9;"></div>
<div style="position:absolute;left:1541px;top:761px;width:369px;height:28px;background:#d9d9d9;"></div>
<div style="position:absolute;left:1218px;top:763.24px;font-size:22.5px;color:#1f2630;font-weight:bold;white-space:nowrap;line-height:normal;letter-spacing:0.3px;">Christmas Day</div>
<div style="position:absolute;left:1214px;top:790px;width:325px;height:29px;background:#ededed;"></div>
<div style="position:absolute;left:1541px;top:790px;width:369px;height:29px;background:#ededed;"></div>
<div style="position:absolute;left:1218px;top:792.84px;font-size:22.5px;color:#1f2630;font-weight:bold;white-space:nowrap;line-height:normal;letter-spacing:0.3px;">Boxing Day</div>
<div style="position:absolute;left:1214px;top:820px;width:325px;height:29px;background:#d9d9d9;"></div>
<div style="position:absolute;left:1541px;top:820px;width:369px;height:29px;background:#d9d9d9;"></div>
<div style="position:absolute;left:1218px;top:822.44px;font-size:22.5px;color:#1f2630;font-weight:bold;white-space:nowrap;line-height:normal;letter-spacing:0.3px;">Additional day 1</div>
<div style="position:absolute;left:1214px;top:850px;width:325px;height:28px;background:#ededed;"></div>
<div style="position:absolute;left:1541px;top:850px;width:369px;height:28px;background:#ededed;"></div>
<div style="position:absolute;left:1218px;top:852.04px;font-size:22.5px;color:#1f2630;font-weight:bold;white-space:nowrap;line-height:normal;letter-spacing:0.3px;">Additional day 2</div>
<div style="position:absolute;left:1214px;top:879px;width:325px;height:29px;background:#d9d9d9;"></div>
<div style="position:absolute;left:1541px;top:879px;width:369px;height:29px;background:#d9d9d9;"></div>
<div style="position:absolute;left:1218px;top:881.64px;font-size:22.5px;color:#1f2630;font-weight:bold;white-space:nowrap;line-height:normal;letter-spacing:0.3px;">Additional day 3</div>
<div style="position:absolute;left:1214px;top:909px;width:325px;height:28px;background:#ededed;"></div>
<div style="position:absolute;left:1541px;top:909px;width:369px;height:28px;background:#ededed;"></div>
<div style="position:absolute;left:1218px;top:911.24px;font-size:22.5px;color:#1f2630;font-weight:bold;white-space:nowrap;line-height:normal;letter-spacing:0.3px;">Additional day 4</div>
<div style="position:absolute;left:1214px;top:938px;width:325px;height:29px;background:#d9d9d9;"></div>
<div style="position:absolute;left:1541px;top:938px;width:369px;height:29px;background:#d9d9d9;"></div>
<div style="position:absolute;left:1218px;top:940.84px;font-size:22.5px;color:#1f2630;font-weight:bold;white-space:nowrap;line-height:normal;letter-spacing:0.3px;">Additional day 5</div>
<div style="position:absolute;left:1214px;top:968px;width:325px;height:29px;background:#ededed;"></div>
<div style="position:absolute;left:1541px;top:968px;width:369px;height:29px;background:#ededed;"></div>
<div style="position:absolute;left:1218px;top:970.44px;font-size:22.5px;color:#1f2630;font-weight:bold;white-space:nowrap;line-height:normal;letter-spacing:0.3px;">Additional day 6</div>
<div style="position:absolute;left:1214px;top:998px;width:325px;height:28px;background:#d9d9d9;"></div>
<div style="position:absolute;left:1541px;top:998px;width:369px;height:28px;background:#d9d9d9;"></div>
<div style="position:absolute;left:1218px;top:1000.04px;font-size:22.5px;color:#1f2630;font-weight:bold;white-space:nowrap;line-height:normal;letter-spacing:0.3px;">Additional day 7</div>
<div style="position:absolute;left:1214px;top:1027px;width:325px;height:29px;background:#ededed;"></div>
<div style="position:absolute;left:1541px;top:1027px;width:369px;height:29px;background:#ededed;"></div>
<div style="position:absolute;left:1218px;top:1029.64px;font-size:22.5px;color:#1f2630;font-weight:bold;white-space:nowrap;line-height:normal;letter-spacing:0.3px;">Additional day 8</div>
<div style="position:absolute;left:1214px;top:1057px;width:325px;height:28px;background:#d9d9d9;"></div>
<div style="position:absolute;left:1541px;top:1057px;width:369px;height:28px;background:#d9d9d9;"></div>
<div style="position:absolute;left:1218px;top:1059.24px;font-size:22.5px;color:#1f2630;font-weight:bold;white-space:nowrap;line-height:normal;letter-spacing:0.3px;">Additional day 9</div>
<div style="position:absolute;left:1214px;top:1086px;width:325px;height:29px;background:#ededed;"></div>
<div style="position:absolute;left:1541px;top:1086px;width:369px;height:29px;background:#ededed;"></div>
<div style="position:absolute;left:1218px;top:1088.84px;font-size:22.5px;color:#1f2630;font-weight:bold;white-space:nowrap;line-height:normal;letter-spacing:0.3px;">Additional day 10</div>
<svg style="position:absolute;left:1904px;top:1109px;" width="6" height="6" viewBox="0 0 6 6"><path d="M5 0v5H0" fill="none" stroke="#3346a0" stroke-width="2"/></svg>
<div style="position:absolute;left:0px;top:1322px;width:1946px;height:38px;background:#e6e6e6;"></div>
<div style="position:absolute;left:0px;top:1321px;width:1946px;height:2px;background:#bfbfbf;"></div>
<svg style="position:absolute;left:34px;top:1332px;" width="8" height="14" viewBox="0 0 8 14"><path d="M7 1L1 7l6 6z" fill="#c8c8c8"/></svg>
<svg style="position:absolute;left:73px;top:1332px;" width="8" height="14" viewBox="0 0 8 14"><path d="M1 1l6 6-6 6z" fill="#c8c8c8"/></svg>
<div style="position:absolute;left:135px;top:1322px;width:167px;height:33px;background:linear-gradient(180deg,#ffffff 0%,#ffff9a 100%);border-left:1px solid #bfbfbf;border-right:1px solid #bfbfbf;box-sizing:border-box;"></div>
<div style="position:absolute;left:134px;top:1352px;width:169px;height:3px;background:#217346;"></div>
<div style="position:absolute;left:135px;top:1330.07px;width:167px;text-align:center;font-size:16.5px;color:#217346;font-weight:bold;white-space:nowrap;line-height:normal;letter-spacing:0.545px;">Roster Template</div>
<svg style="position:absolute;left:346px;top:1329px;" width="23" height="23" viewBox="0 0 23 23"><circle cx="11.5" cy="11.5" r="10.3" fill="none" stroke="#777" stroke-width="1.3"/><path d="M11.5 6v11M6 11.5h11" stroke="#777" stroke-width="1.6"/></svg>
<svg style="position:absolute;left:1549px;top:1333px;" width="5" height="15" viewBox="0 0 5 15"><circle cx="2.5" cy="2" r="1.2" fill="#aaa"/><circle cx="2.5" cy="7.5" r="1.2" fill="#aaa"/><circle cx="2.5" cy="13" r="1.2" fill="#aaa"/></svg>
<div style="position:absolute;left:1593px;top:1331px;width:353px;height:20px;background:#f1f1f1;"></div>
<div style="position:absolute;left:1573px;top:1331px;width:21px;height:20px;background:#fff;border:1px solid #8a8a8a;box-sizing:border-box;"></div>
<svg style="position:absolute;left:1579px;top:1336px;" width="8" height="10" viewBox="0 0 8 10"><path d="M6 0v10L0 5z" fill="#222"/></svg>
<div style="position:absolute;left:0px;top:1359px;width:1946px;height:1px;background:#c8c8c8;"></div>
<div style="position:absolute;left:0px;top:1360px;width:1946px;height:20px;background:#f3f3f3;"></div>
<div style="position:absolute;left:16px;top:1364.97px;font-size:15.5px;color:#444;font-weight:normal;white-space:nowrap;line-height:normal;letter-spacing:-0.951px;">Ready</div>
<svg style="position:absolute;left:83px;top:1363px;" width="18" height="17" viewBox="0 0 18 17"><circle cx="4" cy="4" r="3.5" fill="#666"/><rect x="9" y="2" width="8" height="3" fill="#666"/><path d="M4 9v8M8 9v8M12 9v8M16 9v8M1 12h16M1 16h16" stroke="#777" stroke-width="1.1"/></svg>
<svg style="position:absolute;left:124px;top:1364px;" width="22" height="16" viewBox="0 0 22 16"><path d="M6 3A7 7 0 1 0 13 13" fill="none" stroke="#555" stroke-width="1.5"/><path d="M10 0v7l4 3M14 6h6M17 3v6" fill="none" stroke="#555" stroke-width="1.5"/></svg>
<div style="position:absolute;left:151px;top:1365.42px;font-size:15px;color:#333;font-weight:bold;white-space:nowrap;line-height:normal;letter-spacing:-0.45px;">Accessibility: Investigate</div>
</div></body></html>
